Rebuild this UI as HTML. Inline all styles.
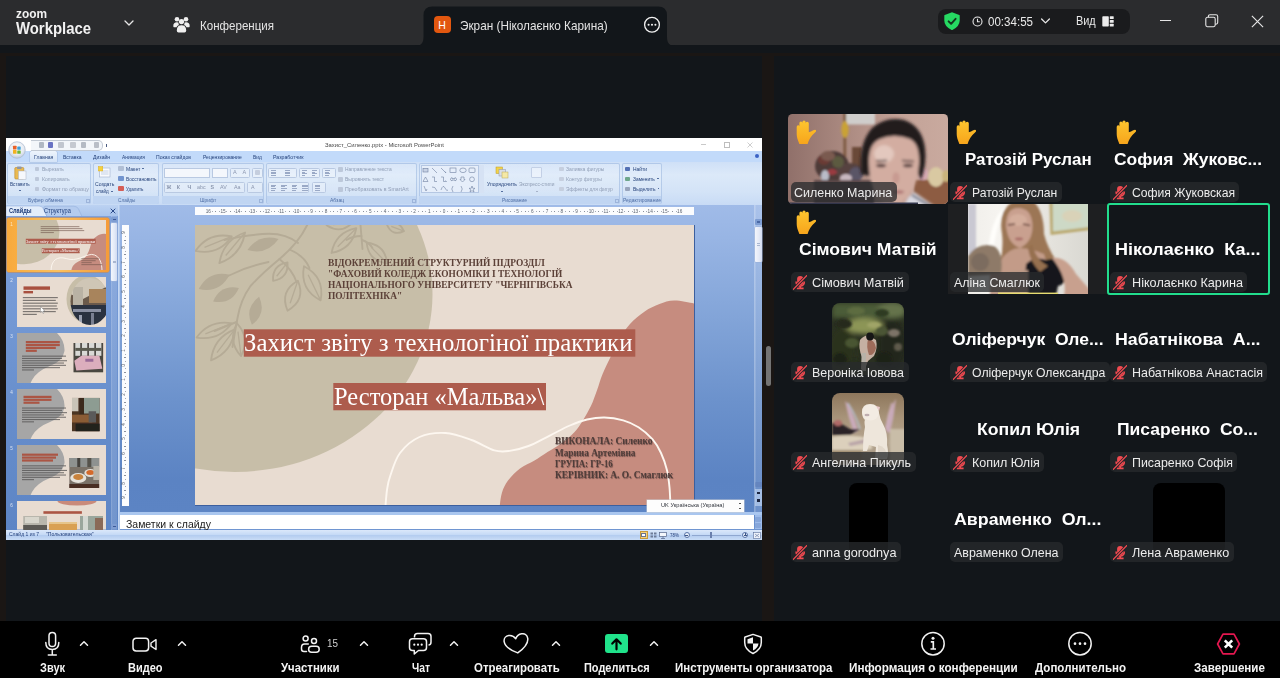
<!DOCTYPE html>
<html lang="ru">
<head>
<meta charset="utf-8">
<title>Zoom Workplace</title>
<style>
html,body{margin:0;padding:0;}
body{width:1280px;height:678px;overflow:hidden;background:#12161a;position:relative;font-family:"Liberation Sans",sans-serif;color:#e8e8e8;}
.abs{position:absolute;}
#topbar{left:0;top:0;width:1280px;height:44.500px;background:#2b2c2e;}
#band{left:0;top:53.300px;width:1280px;height:3px;background:#1a1614;}
#lstrip{left:0;top:53.300px;width:5.700px;height:567.700px;background:#1a1614;}
#divider{left:762.200px;top:53.300px;width:11.700px;height:567.700px;background:#1a1614;}
#toolbar{left:0;top:621px;width:1280px;height:57px;background:#000;}
#tab{display:none}
.t{position:absolute;white-space:pre;line-height:1;}
.pill{height:20px;border-radius:5px;background:rgba(40,42,45,.76);}
</style>
</head>
<body>
<div id="topbar" class="abs"></div>
<div id="band" class="abs"></div>
<div id="lstrip" class="abs"></div>
<div id="divider" class="abs"></div>
<div class="abs" style="left:765.800px;top:345.700px;width:5.200px;height:40.600px;border-radius:2.500px;background:#747474"></div>
<div id="tab" class="abs"></div>
<svg class="abs" style="left:410px;top:0" width="270" height="46" viewBox="0 0 270 46"><path d="M5 46 C11 46 13.500 43 13.500 37 L13.500 15.500 Q13.500 6.500 22.500 6.500 L248 6.500 Q257 6.500 257 15.500 L257 37 C257 43 259.500 46 265.500 46 Z" fill="#12161a"/></svg>
<div class="t" style="left:16.00px;top:7.20px;font-size:13px;font-weight:700;color:#f2f2f2;transform:scaleX(0.9133);transform-origin:0 0;">zoom</div>
<div class="t" style="left:16.00px;top:19.61px;font-size:17px;font-weight:700;color:#f2f2f2;transform:scaleX(0.8755);transform-origin:0 0;">Workplace</div>
<svg class="abs" style="left:123px;top:18px" width="12" height="10" viewBox="0 0 12 10"><path d="M2 3 L6 7 L10 3" fill="none" stroke="#e6e6e6" stroke-width="1.300" stroke-linecap="round" stroke-linejoin="round"/></svg>
<svg class="abs" style="left:173px;top:16px" width="17" height="17" viewBox="0 0 17 17"><g fill="#f0f0f0"><circle cx="4" cy="3.200" r="2.300"/><circle cx="13" cy="3.200" r="2.300"/><circle cx="8.500" cy="5.600" r="2.600"/><path d="M0.300 10 Q0.300 6.300 4 6.300 Q5.300 6.300 5.600 6.800 Q5.300 8.300 6 9 Q3.500 10 3.600 11.300 L1 11.300 Q0.300 11.300 0.300 10Z"/><path d="M16.700 10 Q16.700 6.300 13 6.300 Q11.700 6.300 11.400 6.800 Q11.700 8.300 11 9 Q13.500 10 13.400 11.300 L16 11.300 Q16.700 11.300 16.700 10Z"/><path d="M3.800 14.500 Q3.800 9.300 8.500 9.300 Q13.200 9.300 13.200 14.500 Q13.200 16.400 11.500 16.400 L5.500 16.400 Q3.800 16.400 3.800 14.500Z"/></g></svg>
<div class="t" style="left:199.70px;top:18.80px;font-size:13px;color:#e4e4e4;transform:scaleX(0.8884);transform-origin:0 0;">Конференция</div>
<div class="abs" style="left:433.500px;top:16.300px;width:17px;height:16.600px;border-radius:4px;background:#e2570f"></div>
<div class="t" style="left:438.20px;top:19.71px;font-size:10.5px;color:#fff;">Н</div>
<div class="t" style="left:459.80px;top:19.00px;font-size:13px;color:#e4e4e4;transform:scaleX(0.9055);transform-origin:0 0;">Экран (Ніколаєнко Карина)</div>
<svg class="abs" style="left:643px;top:16px" width="18" height="18" viewBox="0 0 18 18"><circle cx="9" cy="8.700" r="7.400" fill="none" stroke="#f0f0f0" stroke-width="1.300"/><circle cx="5.600" cy="8.700" r="1.050" fill="#f0f0f0"/><circle cx="9" cy="8.700" r="1.050" fill="#f0f0f0"/><circle cx="12.400" cy="8.700" r="1.050" fill="#f0f0f0"/></svg>
<div class="abs" style="left:938px;top:8.500px;width:192px;height:25.500px;border-radius:8px;background:#1a1b1d"></div>
<svg class="abs" style="left:944px;top:11.500px" width="16" height="18.500" viewBox="0 0 16 18.500"><path d="M8 0.300 L15.300 3 Q15.700 3.200 15.700 3.700 L15.700 8.500 Q15.700 14.500 8 18.200 Q0.300 14.500 0.300 8.500 L0.300 3.700 Q0.300 3.200 0.700 3 Z" fill="#26d962"/><path d="M4.600 9.300 L7.100 11.800 L11.600 6.800" fill="none" stroke="#14351f" stroke-width="1.900" stroke-linecap="round" stroke-linejoin="round"/></svg>
<svg class="abs" style="left:972px;top:15.500px" width="11" height="11" viewBox="0 0 11 11"><circle cx="5.500" cy="5.500" r="4.500" fill="none" stroke="#e8e8e8" stroke-width="1.100"/><path d="M5.500 2.800 L5.500 5.700 L7.800 5.700" fill="none" stroke="#e8e8e8" stroke-width="1.100"/></svg>
<div class="t" style="left:988.00px;top:16.02px;font-size:12.5px;color:#eaeaea;transform:scaleX(0.9248);transform-origin:0 0;">00:34:55</div>
<svg class="abs" style="left:1040px;top:17px" width="11" height="8" viewBox="0 0 11 8"><path d="M1.600 2 L5.500 5.900 L9.400 2" fill="none" stroke="#e6e6e6" stroke-width="1.300" stroke-linecap="round" stroke-linejoin="round"/></svg>
<div class="t" style="left:1075.50px;top:15.42px;font-size:12.5px;color:#eaeaea;transform:scaleX(0.8711);transform-origin:0 0;">Вид</div>
<svg class="abs" style="left:1102px;top:15.500px" width="12" height="11" viewBox="0 0 12 11"><g fill="#ececec"><rect x="0.300" y="0.300" width="6.500" height="10.200" rx="0.800"/><rect x="7.800" y="0.300" width="3.900" height="2.800" rx="0.500"/><rect x="7.800" y="4" width="3.900" height="2.800" rx="0.500"/><rect x="7.800" y="7.700" width="3.900" height="2.800" rx="0.500"/></g></svg>
<div class="abs" style="left:1159.500px;top:20px;width:11.500px;height:1.200px;background:#e6e6e6"></div>
<svg class="abs" style="left:1205px;top:14px" width="14" height="14" viewBox="0 0 14 14"><rect x="0.800" y="3.300" width="9.400" height="9.400" rx="1.600" fill="none" stroke="#e6e6e6" stroke-width="1.100"/><path d="M3.400 3.300 L3.400 2.400 Q3.400 0.800 5 0.800 L11 0.800 Q12.700 0.800 12.700 2.400 L12.700 8.600 Q12.700 10.200 11 10.200 L10.200 10.200" fill="none" stroke="#e6e6e6" stroke-width="1.100"/></svg>
<svg class="abs" style="left:1251px;top:15px" width="13" height="13" viewBox="0 0 13 13"><path d="M0.900 0.900 L12.100 12.100 M12.100 0.900 L0.900 12.100" fill="none" stroke="#e6e6e6" stroke-width="1.150"/></svg>
<div class="abs" style="left:0;top:0;width:770px;height:560px;filter:blur(.4px)"><div class="abs" style="left:6px;top:137.8px;width:756.2px;height:401.9px;background:#fff;"></div>
<div class="abs" style="left:6px;top:150.5px;width:756px;height:11.5px;background:#c2dafa;"></div>
<div class="abs" style="left:6px;top:162px;width:756px;height:42.5px;background:linear-gradient(#cfe0f7,#dce9f9 30%,#d3e3f7 70%,#c8dbf5);"></div>
<div class="abs" style="left:30.3px;top:151.3px;width:27px;height:11.2px;background:linear-gradient(#eef4fc,#d3e3f7);border-radius:2px 2px 0 0;box-shadow:0 0 0 .5px #9db7de"></div>
<svg class="abs" style="left:8.200px;top:140.700px" width="18" height="18" viewBox="0 0 21 21"><defs><radialGradient id="ob" cx=".5" cy=".35" r=".7"><stop offset="0" stop-color="#fff"/><stop offset=".6" stop-color="#e6ebf2"/><stop offset="1" stop-color="#b9c4d6"/></radialGradient></defs><circle cx="10.500" cy="10.500" r="9.600" fill="url(#ob)" stroke="#a9b6cb" stroke-width=".8"/><rect x="5.800" y="5.600" width="4.200" height="4.200" rx=".6" fill="#e8622a"/><rect x="10.800" y="6.400" width="4" height="3.800" rx=".6" fill="#3f9fd8"/><rect x="5.800" y="10.600" width="4.200" height="4.200" rx=".6" fill="#f2b01e"/><rect x="10.800" y="11" width="4" height="4" rx=".6" fill="#6fb536"/></svg>
<div class="abs" style="left:31px;top:140.3px;width:71px;height:9.2px;background:#f3f6fa;border:0.6px solid #c2c9d3;border-radius:0 5px 5px 0;border-left:none"></div>
<div class="abs" style="left:38.5px;top:142.3px;width:5.5px;height:5.5px;background:#9aa3b0;opacity:.75;border-radius:1px"></div>
<div class="abs" style="left:47.5px;top:142.3px;width:5.5px;height:5.5px;background:#3b47b0;opacity:.75;border-radius:1px"></div>
<div class="abs" style="left:58px;top:142.3px;width:5.5px;height:5.5px;background:#b0b6c0;opacity:.75;border-radius:1px"></div>
<div class="abs" style="left:70px;top:142.3px;width:5.5px;height:5.5px;background:#b5bac3;opacity:.75;border-radius:1px"></div>
<div class="abs" style="left:80.5px;top:142.3px;width:5.5px;height:5.5px;background:#9fa6b2;opacity:.75;border-radius:1px"></div>
<div class="abs" style="left:93.5px;top:142.3px;width:5.5px;height:5.5px;background:#a5abb6;opacity:.75;border-radius:1px"></div>
<div class="abs" style="left:106.3px;top:144px;width:1.2px;height:3.2px;background:#4a5a80;"></div>
<div class="t" style="left:325.00px;top:142.12px;font-size:6px;color:#484848;transform:scaleX(0.9811);transform-origin:0 0;">Захист_Силенко.pptx - Microsoft PowerPoint</div>
<div class="abs" style="left:701px;top:144.3px;width:5px;height:0.7px;background:#c9c9c9;"></div>
<div class="abs" style="left:724px;top:142px;width:4.2px;height:4.2px;background:transparent;border:0.7px solid #bdbdbd"></div>
<svg class="abs" style="left:746.500px;top:141.500px" width="6" height="6" viewBox="0 0 6 6"><path d="M.5 .5L5.500 5.500M5.500 .5L.5 5.500" stroke="#c2c2c2" stroke-width=".8"/></svg>
<div class="abs" style="left:754.700px;top:154.300px;width:4px;height:4px;border-radius:2px;background:#3b62c4"></div>
<div class="t" style="left:33.75px;top:154.87px;font-size:5.7px;color:#223f78;transform:scaleX(0.8873);transform-origin:0 0;">Главная</div>
<div class="t" style="left:63.40px;top:154.87px;font-size:5.7px;color:#223f78;transform:scaleX(0.8732);transform-origin:0 0;">Вставка</div>
<div class="t" style="left:92.80px;top:154.87px;font-size:5.7px;color:#223f78;transform:scaleX(0.8977);transform-origin:0 0;">Дизайн</div>
<div class="t" style="left:121.60px;top:154.87px;font-size:5.7px;color:#223f78;transform:scaleX(0.8521);transform-origin:0 0;">Анимация</div>
<div class="t" style="left:156.00px;top:154.87px;font-size:5.7px;color:#223f78;transform:scaleX(0.8919);transform-origin:0 0;">Показ слайдов</div>
<div class="t" style="left:202.50px;top:154.87px;font-size:5.7px;color:#223f78;transform:scaleX(0.8804);transform-origin:0 0;">Рецензирование</div>
<div class="t" style="left:252.50px;top:154.87px;font-size:5.7px;color:#223f78;transform:scaleX(0.8485);transform-origin:0 0;">Вид</div>
<div class="t" style="left:272.50px;top:154.87px;font-size:5.7px;color:#223f78;transform:scaleX(0.9175);transform-origin:0 0;">Разработчик</div>
<div class="abs" style="left:7px;top:163px;width:83.6px;height:41px;background:linear-gradient(rgba(255,255,255,.18),rgba(255,255,255,.05));border:0.6px solid rgba(150,178,220,.55);border-radius:2px;box-sizing:border-box"></div>
<div class="abs" style="left:7.6px;top:195.8px;width:82.39999999999999px;height:8px;background:#c0d5f2;border-radius:0 0 2px 2px"></div>
<div class="abs" style="left:92.8px;top:163px;width:66.60000000000001px;height:41px;background:linear-gradient(rgba(255,255,255,.18),rgba(255,255,255,.05));border:0.6px solid rgba(150,178,220,.55);border-radius:2px;box-sizing:border-box"></div>
<div class="abs" style="left:93.39999999999999px;top:195.8px;width:65.4px;height:8px;background:#c0d5f2;border-radius:0 0 2px 2px"></div>
<div class="abs" style="left:161.5px;top:163px;width:102.5px;height:41px;background:linear-gradient(rgba(255,255,255,.18),rgba(255,255,255,.05));border:0.6px solid rgba(150,178,220,.55);border-radius:2px;box-sizing:border-box"></div>
<div class="abs" style="left:162.1px;top:195.8px;width:101.3px;height:8px;background:#c0d5f2;border-radius:0 0 2px 2px"></div>
<div class="abs" style="left:266px;top:163px;width:151px;height:41px;background:linear-gradient(rgba(255,255,255,.18),rgba(255,255,255,.05));border:0.6px solid rgba(150,178,220,.55);border-radius:2px;box-sizing:border-box"></div>
<div class="abs" style="left:266.6px;top:195.8px;width:149.8px;height:8px;background:#c0d5f2;border-radius:0 0 2px 2px"></div>
<div class="abs" style="left:418.5px;top:163px;width:201.5px;height:41px;background:linear-gradient(rgba(255,255,255,.18),rgba(255,255,255,.05));border:0.6px solid rgba(150,178,220,.55);border-radius:2px;box-sizing:border-box"></div>
<div class="abs" style="left:419.1px;top:195.8px;width:200.3px;height:8px;background:#c0d5f2;border-radius:0 0 2px 2px"></div>
<div class="abs" style="left:622px;top:163px;width:40px;height:41px;background:linear-gradient(rgba(255,255,255,.18),rgba(255,255,255,.05));border:0.6px solid rgba(150,178,220,.55);border-radius:2px;box-sizing:border-box"></div>
<div class="abs" style="left:622.6px;top:195.8px;width:38.8px;height:8px;background:#c0d5f2;border-radius:0 0 2px 2px"></div>
<div class="t" style="left:27.50px;top:197.63px;font-size:5.4px;color:#4f6ea4;transform:scaleX(0.9539);transform-origin:0 0;">Буфер обмена</div>
<div class="t" style="left:117.50px;top:197.63px;font-size:5.4px;color:#4f6ea4;transform:scaleX(0.8705);transform-origin:0 0;">Слайды</div>
<div class="t" style="left:200.00px;top:197.63px;font-size:5.4px;color:#4f6ea4;transform:scaleX(0.9146);transform-origin:0 0;">Шрифт</div>
<div class="t" style="left:329.70px;top:197.63px;font-size:5.4px;color:#4f6ea4;transform:scaleX(0.9275);transform-origin:0 0;">Абзац</div>
<div class="t" style="left:501.90px;top:197.63px;font-size:5.4px;color:#4f6ea4;transform:scaleX(0.9193);transform-origin:0 0;">Рисование</div>
<div class="t" style="left:623.00px;top:197.63px;font-size:5.4px;color:#4f6ea4;transform:scaleX(0.9237);transform-origin:0 0;">Редактирование</div>
<div class="abs" style="left:85.5px;top:198.5px;width:2.6px;height:2.6px;background:transparent;border:0.5px solid #9db4da"></div>
<div class="abs" style="left:258.5px;top:198.5px;width:2.6px;height:2.6px;background:transparent;border:0.5px solid #9db4da"></div>
<div class="abs" style="left:411.5px;top:198.5px;width:2.6px;height:2.6px;background:transparent;border:0.5px solid #9db4da"></div>
<div class="abs" style="left:614.5px;top:198.5px;width:2.6px;height:2.6px;background:transparent;border:0.5px solid #9db4da"></div>
<svg class="abs" style="left:13.500px;top:166px" width="13" height="14" viewBox="0 0 13 14"><rect x=".8" y="1.500" width="9" height="11.500" rx="1" fill="#e9b950" stroke="#b98a2e" stroke-width=".6"/><rect x="3" y=".5" width="4.600" height="2.400" rx=".6" fill="#8f97a6"/><rect x="4.500" y="5" width="7.500" height="8.500" fill="#f6f8fc" stroke="#aab3c4" stroke-width=".5"/></svg>
<div class="t" style="left:10.00px;top:182.16px;font-size:5.6px;color:#223f78;transform:scaleX(0.8299);transform-origin:0 0;">Вставить</div>
<div class="abs" style="left:18.8px;top:189.8px;width:2px;height:1px;background:#5570a0;"></div>
<div class="t" style="left:41.60px;top:166.66px;font-size:5.6px;color:#8f9db5;transform:scaleX(0.8752);transform-origin:0 0;">Вырезать</div>
<div class="t" style="left:41.60px;top:176.66px;font-size:5.6px;color:#8f9db5;transform:scaleX(0.9220);transform-origin:0 0;">Копировать</div>
<div class="t" style="left:41.60px;top:186.66px;font-size:5.6px;color:#8f9db5;transform:scaleX(0.9320);transform-origin:0 0;">Формат по образцу</div>
<div class="abs" style="left:34.5px;top:166.5px;width:4.5px;height:4.5px;background:#b4bfd2;border-radius:1px;opacity:.8"></div>
<div class="abs" style="left:34.5px;top:176.5px;width:4.5px;height:4.5px;background:#b4bfd2;border-radius:1px;opacity:.8"></div>
<div class="abs" style="left:34.5px;top:186.5px;width:4.5px;height:4.5px;background:#b4bfd2;border-radius:1px;opacity:.8"></div>
<svg class="abs" style="left:97.500px;top:166px" width="13" height="12" viewBox="0 0 13 12"><rect x="1.500" y="2" width="10.500" height="9" fill="#f8fafd" stroke="#9fb0cc" stroke-width=".6"/><rect x="3" y="4" width="7.500" height="5" fill="#dfe6f2"/><rect x=".3" y=".5" width="4.500" height="4.500" fill="#f5d23c" stroke="#d9a81c" stroke-width=".4"/></svg>
<div class="t" style="left:94.70px;top:182.16px;font-size:5.6px;color:#223f78;transform:scaleX(0.9068);transform-origin:0 0;">Создать</div>
<div class="t" style="left:96.25px;top:188.66px;font-size:5.6px;color:#223f78;transform:scaleX(0.8185);transform-origin:0 0;">слайд</div>
<div class="abs" style="left:110.5px;top:190.8px;width:2px;height:1px;background:#5570a0;"></div>
<div class="t" style="left:125.60px;top:166.66px;font-size:5.6px;color:#223f78;transform:scaleX(0.9086);transform-origin:0 0;">Макет</div>
<div class="t" style="left:125.60px;top:176.66px;font-size:5.6px;color:#223f78;transform:scaleX(0.8547);transform-origin:0 0;">Восстановить</div>
<div class="t" style="left:125.60px;top:186.66px;font-size:5.6px;color:#223f78;transform:scaleX(0.8138);transform-origin:0 0;">Удалить</div>
<div class="abs" style="left:141.8px;top:168.3px;width:1.8px;height:0.9px;background:#5570a0;"></div>
<div class="abs" style="left:117.5px;top:166.3px;width:6px;height:5px;background:#a9b7cf;border-radius:1px;opacity:.85"></div>
<div class="abs" style="left:117.5px;top:176.3px;width:6px;height:5px;background:#5f86c8;border-radius:1px;opacity:.85"></div>
<div class="abs" style="left:117.5px;top:186.3px;width:6px;height:5px;background:#d3453a;border-radius:1px;opacity:.85"></div>
<div class="abs" style="left:163.8px;top:167.5px;width:46.2px;height:10px;background:#f4f7fc;border:0.5px solid #b9c9e2;box-sizing:border-box"></div>
<div class="abs" style="left:211.9px;top:167.5px;width:16.2px;height:10px;background:#f4f7fc;border:0.5px solid #b9c9e2;box-sizing:border-box"></div>
<div class="abs" style="left:230px;top:167.5px;width:20px;height:10px;background:rgba(255,255,255,.25);border:0.5px solid #b9c9e2;box-sizing:border-box;border-radius:1.500px"></div>
<div class="abs" style="left:252px;top:167.5px;width:11px;height:10px;background:rgba(255,255,255,.25);border:0.5px solid #b9c9e2;box-sizing:border-box;border-radius:1.500px"></div>
<div class="abs" style="left:163.5px;top:182px;width:81px;height:10.5px;background:rgba(255,255,255,.22);border:0.5px solid #b9c9e2;box-sizing:border-box;border-radius:1.500px"></div>
<div class="abs" style="left:246.5px;top:182px;width:16.5px;height:10.5px;background:rgba(255,255,255,.22);border:0.5px solid #b9c9e2;box-sizing:border-box;border-radius:1.500px"></div>
<div class="t" style="left:166.50px;top:185.01px;font-size:5.3px;font-weight:700;color:#8995ad;">Ж</div>
<div class="t" style="left:176.80px;top:185.01px;font-size:5.3px;font-weight:700;color:#8995ad;">К</div>
<div class="t" style="left:187.50px;top:185.01px;font-size:5.3px;font-weight:700;color:#8995ad;">Ч</div>
<div class="t" style="left:197.00px;top:185.01px;font-size:5.3px;color:#8995ad;">abc</div>
<div class="t" style="left:210.50px;top:185.01px;font-size:5.3px;font-weight:700;color:#8995ad;">S</div>
<div class="t" style="left:220.00px;top:185.01px;font-size:5.3px;color:#8995ad;">AV</div>
<div class="t" style="left:234.00px;top:185.01px;font-size:5.3px;color:#8995ad;">Aa</div>
<div class="t" style="left:251.00px;top:185.01px;font-size:5.3px;color:#8995ad;">A</div>
<div class="t" style="left:233.00px;top:170.34px;font-size:5.5px;color:#8c98b0;">A</div>
<div class="t" style="left:242.50px;top:170.34px;font-size:5.5px;color:#8c98b0;">A</div>
<div class="abs" style="left:255.3px;top:170px;width:4.5px;height:4.5px;background:#c5cede;border-radius:1px"></div>
<div class="abs" style="left:267.8px;top:167.5px;width:29px;height:10px;background:rgba(255,255,255,.25);border:0.5px solid #b9c9e2;box-sizing:border-box;border-radius:1.500px"></div>
<div class="abs" style="left:298.5px;top:167.5px;width:21px;height:10px;background:rgba(255,255,255,.25);border:0.5px solid #b9c9e2;box-sizing:border-box;border-radius:1.500px"></div>
<div class="abs" style="left:321.5px;top:167.5px;width:14px;height:10px;background:rgba(255,255,255,.25);border:0.5px solid #b9c9e2;box-sizing:border-box;border-radius:1.500px"></div>
<div class="abs" style="left:267.8px;top:182px;width:41.5px;height:10.5px;background:rgba(255,255,255,.25);border:0.5px solid #b9c9e2;box-sizing:border-box;border-radius:1.500px"></div>
<div class="abs" style="left:311.5px;top:182px;width:14px;height:10.5px;background:rgba(255,255,255,.25);border:0.5px solid #b9c9e2;box-sizing:border-box;border-radius:1.500px"></div>
<div class="abs" style="left:271px;top:170.0px;width:5px;height:0.8px;background:#9aa9c6;"></div><div class="abs" style="left:271px;top:171.7px;width:5px;height:0.8px;background:#9aa9c6;"></div><div class="abs" style="left:271px;top:173.4px;width:5px;height:0.8px;background:#9aa9c6;"></div><div class="abs" style="left:271px;top:175.1px;width:5px;height:0.8px;background:#9aa9c6;"></div>
<div class="abs" style="left:285px;top:170.0px;width:5px;height:0.8px;background:#9aa9c6;"></div><div class="abs" style="left:285px;top:171.7px;width:5px;height:0.8px;background:#9aa9c6;"></div><div class="abs" style="left:285px;top:173.4px;width:5px;height:0.8px;background:#9aa9c6;"></div><div class="abs" style="left:285px;top:175.1px;width:5px;height:0.8px;background:#9aa9c6;"></div>
<div class="abs" style="left:301.5px;top:170.0px;width:5px;height:0.8px;background:#9aa9c6;"></div><div class="abs" style="left:301.5px;top:171.7px;width:3.5px;height:0.8px;background:#9aa9c6;"></div><div class="abs" style="left:301.5px;top:173.4px;width:5px;height:0.8px;background:#9aa9c6;"></div><div class="abs" style="left:301.5px;top:175.1px;width:3.5px;height:0.8px;background:#9aa9c6;"></div>
<div class="abs" style="left:311.5px;top:170.0px;width:5px;height:0.8px;background:#9aa9c6;"></div><div class="abs" style="left:311.5px;top:171.7px;width:3.5px;height:0.8px;background:#9aa9c6;"></div><div class="abs" style="left:311.5px;top:173.4px;width:5px;height:0.8px;background:#9aa9c6;"></div><div class="abs" style="left:311.5px;top:175.1px;width:3.5px;height:0.8px;background:#9aa9c6;"></div>
<div class="abs" style="left:325px;top:170.0px;width:5px;height:0.8px;background:#9aa9c6;"></div><div class="abs" style="left:325px;top:171.7px;width:4px;height:0.8px;background:#9aa9c6;"></div><div class="abs" style="left:325px;top:173.4px;width:5px;height:0.8px;background:#9aa9c6;"></div><div class="abs" style="left:325px;top:175.1px;width:4px;height:0.8px;background:#9aa9c6;"></div>
<div class="abs" style="left:270.5px;top:184.5px;width:5.5px;height:0.8px;background:#9aa9c6;"></div><div class="abs" style="left:270.5px;top:186.2px;width:4px;height:0.8px;background:#9aa9c6;"></div><div class="abs" style="left:270.5px;top:187.9px;width:5.5px;height:0.8px;background:#9aa9c6;"></div><div class="abs" style="left:270.5px;top:189.6px;width:4px;height:0.8px;background:#9aa9c6;"></div>
<div class="abs" style="left:281px;top:184.5px;width:5.5px;height:0.8px;background:#9aa9c6;"></div><div class="abs" style="left:281px;top:186.2px;width:3.5px;height:0.8px;background:#9aa9c6;"></div><div class="abs" style="left:281px;top:187.9px;width:5.5px;height:0.8px;background:#9aa9c6;"></div><div class="abs" style="left:281px;top:189.6px;width:3.5px;height:0.8px;background:#9aa9c6;"></div>
<div class="abs" style="left:291.5px;top:184.5px;width:5.5px;height:0.8px;background:#9aa9c6;"></div><div class="abs" style="left:291.5px;top:186.2px;width:4px;height:0.8px;background:#9aa9c6;"></div><div class="abs" style="left:291.5px;top:187.9px;width:5.5px;height:0.8px;background:#9aa9c6;"></div><div class="abs" style="left:291.5px;top:189.6px;width:4px;height:0.8px;background:#9aa9c6;"></div>
<div class="abs" style="left:302px;top:184.5px;width:5.5px;height:0.8px;background:#9aa9c6;"></div><div class="abs" style="left:302px;top:186.2px;width:5.5px;height:0.8px;background:#9aa9c6;"></div><div class="abs" style="left:302px;top:187.9px;width:5.5px;height:0.8px;background:#9aa9c6;"></div><div class="abs" style="left:302px;top:189.6px;width:5.5px;height:0.8px;background:#9aa9c6;"></div>
<div class="abs" style="left:314.5px;top:184.5px;width:5.5px;height:0.8px;background:#9aa9c6;"></div><div class="abs" style="left:314.5px;top:186.2px;width:5.5px;height:0.8px;background:#9aa9c6;"></div><div class="abs" style="left:314.5px;top:187.9px;width:5.5px;height:0.8px;background:#9aa9c6;"></div><div class="abs" style="left:314.5px;top:189.6px;width:5.5px;height:0.8px;background:#9aa9c6;"></div>
<div class="t" style="left:345.30px;top:166.66px;font-size:5.6px;color:#8f9db5;transform:scaleX(0.8797);transform-origin:0 0;">Направление текста</div>
<div class="t" style="left:345.30px;top:176.66px;font-size:5.6px;color:#8f9db5;transform:scaleX(0.8963);transform-origin:0 0;">Выровнять текст</div>
<div class="t" style="left:345.30px;top:186.66px;font-size:5.6px;color:#8f9db5;transform:scaleX(0.9378);transform-origin:0 0;">Преобразовать в SmartArt</div>
<div class="abs" style="left:338px;top:166.5px;width:5px;height:5px;background:#b4bfd2;border-radius:1px;opacity:.8"></div>
<div class="abs" style="left:338px;top:176.5px;width:5px;height:5px;background:#b4bfd2;border-radius:1px;opacity:.8"></div>
<div class="abs" style="left:338px;top:186.5px;width:5px;height:5px;background:#b4bfd2;border-radius:1px;opacity:.8"></div>
<div class="abs" style="left:420.6px;top:165px;width:63px;height:27.5px;background:#e6eefa;border:0.5px solid #b5c7e3;box-sizing:border-box"></div>
<div class="abs" style="left:478.3px;top:165px;width:5.3px;height:27.5px;background:#d6e2f4;border-left:0.5px solid #b5c7e3;box-sizing:border-box"></div>
<svg class="abs" style="left:421px;top:165.500px" width="57" height="27" viewBox="0 0 57 27"><g fill="none" stroke="#6f7fa0" stroke-width=".6"><rect x="2" y="2.500" width="5" height="3.500" fill="#c9d3e6"/><path d="M11 2 L16 7"/><path d="M20 2 L25 7 L24 5.500"/><rect x="29" y="2" width="6" height="4.500"/><ellipse cx="42" cy="4.300" rx="3.200" ry="2.300"/><rect x="48" y="2" width="6" height="4.500" rx="1"/><path d="M2 15.500 L4.500 11 L7 15.500Z"/><path d="M11 11 L13.500 11 L13.500 15.500 L16 15.500"/><path d="M20 11 L22.500 11 L22.500 15.500 L25.500 15.500 L24.500 14.500"/><path d="M29 13.300 L31 11.500 L31 12.500 L34 12.500 L34 11.500 L36 13.300 L34 15 L34 14 L31 14 L31 15Z"/><path d="M40 11 L43 11 L43 13.500 L44 13.500 L41.500 16 L39 13.500 L40 13.500Z"/><circle cx="51" cy="13.300" r="2.400"/><path d="M3 20 L5 25 L6 23"/><path d="M11 21 Q14 20 16 25"/><path d="M20 24 Q22 18 24 22 T27 24"/><path d="M32 20 Q29.500 23 32 26"/><path d="M40 20 Q42.500 23 40 26"/><path d="M51 20 L51.800 22.300 L54 22.300 L52.300 23.700 L53 26 L51 24.600 L49 26 L49.700 23.700 L48 22.300 L50.200 22.300Z"/></g></svg>
<svg class="abs" style="left:494.500px;top:165.500px" width="14" height="13" viewBox="0 0 14 13"><rect x="1" y="1" width="6.500" height="6.500" fill="#f3d24a" stroke="#b99a2a" stroke-width=".5"/><rect x="4" y="3.500" width="6.500" height="6.500" fill="#d9dee8" stroke="#8c96aa" stroke-width=".5"/><rect x="7" y="6" width="6" height="6" fill="#f5e9a6" stroke="#b9a85a" stroke-width=".5"/></svg>
<div class="t" style="left:486.90px;top:182.16px;font-size:5.6px;color:#223f78;transform:scaleX(0.9002);transform-origin:0 0;">Упорядочить</div>
<div class="t" style="left:519.00px;top:182.16px;font-size:5.6px;color:#8f9db5;transform:scaleX(0.8644);transform-origin:0 0;">Экспресс-стили</div>
<div class="abs" style="left:500.8px;top:190.8px;width:2px;height:1px;background:#5570a0;"></div>
<div class="abs" style="left:536px;top:190.8px;width:2px;height:1px;background:#a7b3c9;"></div>
<div class="abs" style="left:530.5px;top:166.5px;width:11px;height:11px;background:rgba(255,255,255,.35);border:0.5px solid #c3d0e6;box-sizing:border-box;border-radius:1px"></div>
<div class="t" style="left:566.00px;top:166.66px;font-size:5.6px;color:#8f9db5;transform:scaleX(0.8979);transform-origin:0 0;">Заливка фигуры</div>
<div class="t" style="left:566.00px;top:176.66px;font-size:5.6px;color:#8f9db5;transform:scaleX(0.9168);transform-origin:0 0;">Контур фигуры</div>
<div class="t" style="left:566.00px;top:186.66px;font-size:5.6px;color:#8f9db5;transform:scaleX(0.8704);transform-origin:0 0;">Эффекты для фигур</div>
<div class="abs" style="left:558.5px;top:166.5px;width:5.5px;height:4.5px;background:#c3ccdc;border-radius:1px;opacity:.9"></div>
<div class="abs" style="left:558.5px;top:176.5px;width:5.5px;height:4.5px;background:#c3ccdc;border-radius:1px;opacity:.9"></div>
<div class="abs" style="left:558.5px;top:186.5px;width:5.5px;height:4.5px;background:#c3ccdc;border-radius:1px;opacity:.9"></div>
<div class="t" style="left:632.50px;top:166.66px;font-size:5.6px;color:#223f78;transform:scaleX(0.8823);transform-origin:0 0;">Найти</div>
<div class="t" style="left:632.50px;top:176.66px;font-size:5.6px;color:#223f78;transform:scaleX(0.8703);transform-origin:0 0;">Заменить</div>
<div class="t" style="left:632.50px;top:186.66px;font-size:5.6px;color:#223f78;transform:scaleX(0.8709);transform-origin:0 0;">Выделить</div>
<div class="abs" style="left:625px;top:166.5px;width:5px;height:4.5px;background:#3b5aa8;border-radius:1px;opacity:.85"></div>
<div class="abs" style="left:625px;top:176.5px;width:5px;height:4.5px;background:#5a9a78;border-radius:1px;opacity:.85"></div>
<div class="abs" style="left:625px;top:186.5px;width:5px;height:4.5px;background:#8c98b0;border-radius:1px;opacity:.85"></div>
<div class="abs" style="left:656.8px;top:178.3px;width:1.8px;height:0.9px;background:#5570a0;"></div>
<div class="abs" style="left:657.5px;top:188.3px;width:1.8px;height:0.9px;background:#5570a0;"></div>
<div class="abs" style="left:6px;top:204.5px;width:756px;height:325.5px;background:linear-gradient(#a0bbe8,#98b5e4 10%,#82a4d8 35%,#6c92cc 60%,#5b83c3 85%,#5c84c4 94%,#7096d2);"></div>
<div class="abs" style="left:6px;top:204.5px;width:113px;height:11.5px;background:linear-gradient(#bcd2f2,#a9c4ec);"></div>
<svg class="abs" style="left:6px;top:204.500px" width="84" height="12" viewBox="0 0 84 12"><path d="M0 11.500 L0 1 L33 1 Q36 1 37.500 4 L41 11.500 Z" fill="#e3edfb" stroke="#8fabd8" stroke-width=".5"/><path d="M41 11.500 L37.800 4 Q37 1.200 40 1.200 L68 1.200 Q71 1.200 72.500 4 L76 11.500 Z" fill="#b4cbee" stroke="#8fabd8" stroke-width=".5"/></svg>
<div class="t" style="left:8.75px;top:208.11px;font-size:6.6px;font-weight:700;color:#1c3a78;transform:scaleX(0.8486);transform-origin:0 0;">Слайды</div>
<div class="t" style="left:44.40px;top:208.37px;font-size:6.3px;color:#23427e;transform:scaleX(0.8966);transform-origin:0 0;">Структура</div>
<svg class="abs" style="left:110px;top:208px" width="6" height="6" viewBox="0 0 6 6"><path d="M.7 .7L5.300 5.300M5.300 .7L.7 5.300" stroke="#2c4a8a" stroke-width="1"/></svg>
<div class="abs" style="left:6px;top:216px;width:112.5px;height:314px;background:linear-gradient(#7fa2dc,#7499d5 30%,#668dcb 65%,#5d85c5);"></div>
<div class="abs" style="left:7px;top:218px;width:101.500px;height:54.200px;background:linear-gradient(90deg,#f7a93c,#fbc05e 50%,#f59b38);border-radius:1.500px;box-shadow:0 0 0 .5px #e48a2c"></div>
<div class="t" style="left:10.20px;top:222.71px;font-size:4.6px;color:rgba(255,240,210,.9);">1</div>
<div class="t" style="left:10.20px;top:278.91px;font-size:4.6px;color:rgba(255,255,255,.75);">2</div>
<div class="t" style="left:10.20px;top:335.21px;font-size:4.6px;color:rgba(255,255,255,.75);">3</div>
<div class="t" style="left:10.20px;top:391.31px;font-size:4.6px;color:rgba(255,255,255,.75);">4</div>
<div class="t" style="left:10.20px;top:447.41px;font-size:4.6px;color:rgba(255,255,255,.75);">5</div>
<div class="t" style="left:10.20px;top:503.61px;font-size:4.6px;color:rgba(255,255,255,.75);">6</div>
<svg class="abs" style="left:17.3px;top:220.3px" width="89" height="50.2" viewBox="194.500 225 498.500 280" preserveAspectRatio="none"><rect x="194.500" y="225" width="498.500" height="280" fill="#e8dcd1"/><ellipse cx="234" cy="294" rx="198" ry="178" fill="#c7bea8"/><path d="M694 303.600 C660 296 625 320 610 356 C598 400 585 440 547 452 C515 465 502 485 499 506 L694 506Z" fill="#c68c7f"/><path d="M385 507 C386 450 420 425 470 440 C530 460 570 420 613 417 C660 420 670 470 670.600 507" fill="none" stroke="#fdf7f0" stroke-width="5"/><rect x="244" y="329.500" width="391" height="27.600" fill="#ad5c4d"/><rect x="333.500" y="382.800" width="212.200" height="27.700" fill="#ad5c4d"/><g fill="#6b5047" opacity=".55"><rect x="327" y="259" width="217" height="6"/><rect x="327" y="270" width="234" height="6"/><rect x="327" y="281" width="244" height="6"/><rect x="327" y="292" width="74" height="6"/><rect x="555" y="438" width="97" height="6"/><rect x="555" y="449" width="80" height="6"/><rect x="555" y="460" width="58" height="6"/><rect x="555" y="471" width="117" height="6"/></g><g fill="#fff" font-family="Liberation Serif, serif" font-size="25.400"><text x="244.500" y="351.400" textLength="388" lengthAdjust="spacingAndGlyphs">Захист звіту з технологіної практики</text><text x="334" y="405.200" textLength="210" lengthAdjust="spacingAndGlyphs">Ресторан «Мальва»\</text></g></svg>
<svg class="abs" style="left:17.3px;top:276.5px" width="89" height="50.2" viewBox="0 0 89 50.200"><defs><clipPath id="t2c"><ellipse cx="73" cy="24.500" rx="19.500" ry="23.500"/></clipPath></defs><rect width="89" height="50.200" fill="#e8dcd1"/><ellipse cx="70" cy="22" rx="20.500" ry="24" fill="#c7bea8"/><g clip-path="url(#t2c)" filter="url(#b05)"><rect x="50" y="0" width="40" height="50.200" fill="#6b5a4c"/><path d="M50 0 L89 0 L89 10 L66 22 L50 16Z" fill="#cfc6b6"/><rect x="56" y="10" width="10" height="18" fill="#b9b2a4"/><rect x="72" y="12" width="17" height="14" fill="#a8845c"/><rect x="50" y="28" width="40" height="23" fill="#2c3140"/><rect x="56" y="32" width="28" height="3" fill="#8a90a2"/><rect x="62" y="38" width="3" height="10" fill="#9aa0b0"/><rect x="74" y="36" width="3" height="12" fill="#7a8092"/></g><rect x="6.500" y="9.400" width="26.500" height="3.400" fill="#a8503f"/><rect x="6.500" y="14" width="9.500" height="2.400" fill="#a8503f"/><g fill="#5a5654" opacity=".75"><rect x="5.800" y="20" width="35" height="1.200"/><rect x="5.800" y="22.800" width="33" height="1.200"/><rect x="5.800" y="25.600" width="35" height="1.200"/><rect x="5.800" y="28.400" width="34" height="1.200"/><rect x="5.800" y="31.200" width="35" height="1.200"/><rect x="5.800" y="34" width="33" height="1.200"/><rect x="5.800" y="36.800" width="14" height="1.200"/></g><path d="M23.500 29.500 L23.500 35.500 L25 34.300 L26 36.600 L27 36.100 L26 34 L27.800 33.800Z" fill="#fff" stroke="#666" stroke-width=".35"/></svg>
<svg class="abs" style="left:17.3px;top:332.8px" width="89" height="50.2" viewBox="0 0 89 50.200"><rect width="89" height="50.200" fill="#e8dcd1"/><path d="M0 0 L40 0 Q48 8 47.500 18 Q46 28 33 33 Q20 38 15 47 L13.500 50.200 L0 50.200Z" fill="#a6a6a6"/><rect x="8.8" y="8.0" width="34" height="2.200" fill="#ab5544"/><rect x="8.8" y="10.9" width="34" height="2.200" fill="#ab5544"/><rect x="8.8" y="13.8" width="30" height="2.200" fill="#ab5544"/><rect x="8.8" y="16.7" width="11" height="2.200" fill="#ab5544"/><g fill="#4c4a4a" opacity=".7"><rect x="5" y="22.6" width="44" height="1.100"/><rect x="5" y="24.9" width="40" height="1.100"/><rect x="5" y="27.2" width="45" height="1.100"/><rect x="5" y="29.5" width="42" height="1.100"/><rect x="5" y="31.8" width="44" height="1.100"/><rect x="5" y="34.1" width="38" height="1.100"/><rect x="5" y="36.4" width="12" height="1.100"/></g><g filter="url(#b05)"><svg x="56.3" y="10" width="30.1" height="29.6" viewBox="0 0 30 30" preserveAspectRatio="none"><rect width="30" height="30" fill="#4a463f"/><rect x="2" y="0" width="26" height="13" fill="#d9d9d6"/><rect x="7" y="0" width="1.500" height="14" fill="#3a3632"/><rect x="14" y="0" width="1.500" height="14" fill="#3a3632"/><rect x="21" y="0" width="1.500" height="14" fill="#3a3632"/><rect x="2" y="5" width="26" height="3" fill="#5a5a50"/><path d="M1 18 L8 13 L26 13 L29 26 L3 28Z" fill="#dcaebd"/><rect x="12" y="16" width="8" height="3" fill="#9a6a98"/></svg></g></svg>
<svg class="abs" style="left:17.3px;top:388.9px" width="89" height="50.2" viewBox="0 0 89 50.200"><rect width="89" height="50.200" fill="#e8dcd1"/><path d="M0 0 L40 0 Q48 8 47.500 18 Q46 28 33 33 Q20 38 15 47 L13.500 50.200 L0 50.200Z" fill="#a6a6a6"/><rect x="6.5" y="6.8" width="28" height="2.200" fill="#ab5544"/><rect x="6.5" y="9.7" width="28" height="2.200" fill="#ab5544"/><rect x="6.5" y="12.6" width="16" height="2.200" fill="#ab5544"/><g fill="#4c4a4a" opacity=".7"><rect x="5" y="18.5" width="44" height="1.100"/><rect x="5" y="20.8" width="40" height="1.100"/><rect x="5" y="23.1" width="45" height="1.100"/><rect x="5" y="25.4" width="42" height="1.100"/><rect x="5" y="27.7" width="44" height="1.100"/><rect x="5" y="30.0" width="38" height="1.100"/><rect x="5" y="32.3" width="12" height="1.100"/></g><g filter="url(#b05)"><svg x="54.9" y="8.8" width="27.9" height="33.7" viewBox="0 0 30 30" preserveAspectRatio="none"><rect width="30" height="30" fill="#4c3424"/><rect x="13" y="0" width="17" height="14" fill="#8d9c92"/><rect x="0" y="0" width="7" height="12" fill="#c9c4b8"/><rect x="8" y="0" width="5" height="18" fill="#3a2a1e"/><rect x="0" y="15" width="22" height="7" fill="#8a5c34"/><rect x="4" y="23" width="26" height="7" fill="#23201f"/><rect x="18" y="12" width="8" height="10" fill="#5a5a5a"/></svg></g></svg>
<svg class="abs" style="left:17.3px;top:445px" width="89" height="50.2" viewBox="0 0 89 50.200"><rect width="89" height="50.200" fill="#e8dcd1"/><path d="M0 0 L40 0 Q48 8 47.500 18 Q46 28 33 33 Q20 38 15 47 L13.500 50.200 L0 50.200Z" fill="#a6a6a6"/><rect x="5" y="8.6" width="36" height="2.200" fill="#ab5544"/><rect x="5" y="11.5" width="34" height="2.200" fill="#ab5544"/><rect x="5" y="14.4" width="31" height="2.200" fill="#ab5544"/><g fill="#4c4a4a" opacity=".7"><rect x="5" y="20.3" width="44" height="1.100"/><rect x="5" y="22.6" width="40" height="1.100"/><rect x="5" y="24.9" width="45" height="1.100"/><rect x="5" y="27.2" width="42" height="1.100"/><rect x="5" y="29.5" width="44" height="1.100"/><rect x="5" y="31.8" width="38" height="1.100"/><rect x="5" y="34.1" width="12" height="1.100"/></g><g filter="url(#b05)"><svg x="52.2" y="13" width="30.2" height="30" viewBox="0 0 30 30" preserveAspectRatio="none"><rect width="30" height="30" fill="#7a7268"/><rect x="0" y="0" width="30" height="9" fill="#8e9290"/><rect x="8" y="0" width="3" height="9" fill="#44423e"/><rect x="18" y="0" width="4" height="9" fill="#55524c"/><ellipse cx="9" cy="20" rx="8" ry="5" fill="#e6e2da"/><ellipse cx="9" cy="19" rx="5" ry="3" fill="#c9833c"/><ellipse cx="21" cy="15" rx="6" ry="4" fill="#e2ded6"/><ellipse cx="21" cy="14.500" rx="4" ry="2.500" fill="#d46a2c"/><rect x="0" y="26" width="30" height="4" fill="#4a2e22"/><rect x="24" y="8" width="6" height="14" fill="#b9b4a8"/></svg></g></svg>
<svg class="abs" style="left:17.3px;top:501.2px" width="89" height="28.600" viewBox="0 0 89 28.600"><rect width="89" height="28.600" fill="#e8dcd1"/><ellipse cx="60" cy="0" rx="19.500" ry="4.500" fill="#c98a7a"/><rect x="26.400" y="10.200" width="38.500" height="2.600" fill="#ab5544"/><g filter="url(#b05)"><rect x="6.200" y="15" width="23.800" height="14" fill="#b8b6ac"/><rect x="8" y="16" width="14" height="6" fill="#d8d6cc"/><rect x="6.200" y="24" width="23.800" height="5" fill="#5c5a54"/><rect x="32" y="21" width="28" height="8" fill="#d9a052"/><rect x="32" y="21" width="28" height="2" fill="#e6c48a"/><rect x="63" y="15" width="23" height="14" fill="#9aa69c"/><rect x="78" y="17" width="8" height="12" fill="#8a6a58"/><rect x="66" y="15" width="5" height="14" fill="#d4d8d2"/></g></svg>
<div class="abs" style="left:110.8px;top:216px;width:6.7px;height:314px;background:linear-gradient(90deg,rgba(255,255,255,.3),rgba(255,255,255,.14) 25%,rgba(255,255,255,.12));"></div>
<div class="abs" style="left:111.3px;top:217px;width:5.8px;height:5px;background:#7e9dd2;border-radius:1px"></div>
<div class="abs" style="left:112.8px;top:218.8px;width:2.8px;height:1.3px;background:#3c5a98;"></div>
<div class="abs" style="left:111.3px;top:222.5px;width:5.8px;height:58.5px;background:linear-gradient(90deg,#f3f6fc,#e2e9f7 60%,#d0dbf1);border-radius:1px;box-shadow:0 0 0 .5px #9ab0d8"></div>
<div class="abs" style="left:112.6px;top:260.5px;width:3px;height:0.6px;background:#a9b6d0;"></div>
<div class="abs" style="left:112.6px;top:262px;width:3px;height:0.6px;background:#a9b6d0;"></div>
<div class="abs" style="left:111.3px;top:524.3px;width:5.8px;height:5px;background:#7e9dd2;border-radius:1px"></div>
<div class="abs" style="left:112.8px;top:526.2px;width:2.8px;height:1.3px;background:#3c5a98;"></div>
<div class="abs" style="left:117.5px;top:204.5px;width:2.3px;height:325.5px;background:linear-gradient(90deg,#cfdff6,#a9c3ea);"></div>
<div class="abs" style="left:194.5px;top:207.2px;width:499px;height:8px;background:#fbfcfe;"></div>
<div class="abs" style="left:121.8px;top:225px;width:6.8px;height:280.5px;background:#fbfcfe;"></div>
<div class="t" style="left:205.72px;top:209.62px;font-size:4.7px;color:#5d6470;">16</div><div class="abs" style="left:215.42px;top:210.6px;width:0.7px;height:1.8px;background:#8a909c;"></div><div class="abs" style="left:211.72px;top:211.3px;width:0.7px;height:0.8px;background:#a5abb6;"></div><div class="abs" style="left:219.12px;top:211.3px;width:0.7px;height:0.8px;background:#a5abb6;"></div><div class="t" style="left:220.45px;top:209.62px;font-size:4.7px;color:#5d6470;">15</div><div class="abs" style="left:230.14999999999998px;top:210.6px;width:0.7px;height:1.8px;background:#8a909c;"></div><div class="abs" style="left:226.45px;top:211.3px;width:0.7px;height:0.8px;background:#a5abb6;"></div><div class="abs" style="left:233.85px;top:211.3px;width:0.7px;height:0.8px;background:#a5abb6;"></div><div class="t" style="left:235.18px;top:209.62px;font-size:4.7px;color:#5d6470;">14</div><div class="abs" style="left:244.88px;top:210.6px;width:0.7px;height:1.8px;background:#8a909c;"></div><div class="abs" style="left:241.18px;top:211.3px;width:0.7px;height:0.8px;background:#a5abb6;"></div><div class="abs" style="left:248.58px;top:211.3px;width:0.7px;height:0.8px;background:#a5abb6;"></div><div class="t" style="left:249.91px;top:209.62px;font-size:4.7px;color:#5d6470;">13</div><div class="abs" style="left:259.61px;top:210.6px;width:0.7px;height:1.8px;background:#8a909c;"></div><div class="abs" style="left:255.91px;top:211.3px;width:0.7px;height:0.8px;background:#a5abb6;"></div><div class="abs" style="left:263.31px;top:211.3px;width:0.7px;height:0.8px;background:#a5abb6;"></div><div class="t" style="left:264.64px;top:209.62px;font-size:4.7px;color:#5d6470;">12</div><div class="abs" style="left:274.34000000000003px;top:210.6px;width:0.7px;height:1.8px;background:#8a909c;"></div><div class="abs" style="left:270.64px;top:211.3px;width:0.7px;height:0.8px;background:#a5abb6;"></div><div class="abs" style="left:278.04px;top:211.3px;width:0.7px;height:0.8px;background:#a5abb6;"></div><div class="t" style="left:279.37px;top:209.62px;font-size:4.7px;color:#5d6470;">11</div><div class="abs" style="left:289.07000000000005px;top:210.6px;width:0.7px;height:1.8px;background:#8a909c;"></div><div class="abs" style="left:285.37px;top:211.3px;width:0.7px;height:0.8px;background:#a5abb6;"></div><div class="abs" style="left:292.77000000000004px;top:211.3px;width:0.7px;height:0.8px;background:#a5abb6;"></div><div class="t" style="left:294.10px;top:209.62px;font-size:4.7px;color:#5d6470;">10</div><div class="abs" style="left:303.8px;top:210.6px;width:0.7px;height:1.8px;background:#8a909c;"></div><div class="abs" style="left:300.09999999999997px;top:211.3px;width:0.7px;height:0.8px;background:#a5abb6;"></div><div class="abs" style="left:307.5px;top:211.3px;width:0.7px;height:0.8px;background:#a5abb6;"></div><div class="t" style="left:310.13px;top:209.62px;font-size:4.7px;color:#5d6470;">9</div><div class="abs" style="left:318.53000000000003px;top:210.6px;width:0.7px;height:1.8px;background:#8a909c;"></div><div class="abs" style="left:314.83px;top:211.3px;width:0.7px;height:0.8px;background:#a5abb6;"></div><div class="abs" style="left:322.23px;top:211.3px;width:0.7px;height:0.8px;background:#a5abb6;"></div><div class="t" style="left:324.86px;top:209.62px;font-size:4.7px;color:#5d6470;">8</div><div class="abs" style="left:333.26px;top:210.6px;width:0.7px;height:1.8px;background:#8a909c;"></div><div class="abs" style="left:329.55999999999995px;top:211.3px;width:0.7px;height:0.8px;background:#a5abb6;"></div><div class="abs" style="left:336.96px;top:211.3px;width:0.7px;height:0.8px;background:#a5abb6;"></div><div class="t" style="left:339.59px;top:209.62px;font-size:4.7px;color:#5d6470;">7</div><div class="abs" style="left:347.99px;top:210.6px;width:0.7px;height:1.8px;background:#8a909c;"></div><div class="abs" style="left:344.28999999999996px;top:211.3px;width:0.7px;height:0.8px;background:#a5abb6;"></div><div class="abs" style="left:351.69px;top:211.3px;width:0.7px;height:0.8px;background:#a5abb6;"></div><div class="t" style="left:354.32px;top:209.62px;font-size:4.7px;color:#5d6470;">6</div><div class="abs" style="left:362.72px;top:210.6px;width:0.7px;height:1.8px;background:#8a909c;"></div><div class="abs" style="left:359.02px;top:211.3px;width:0.7px;height:0.8px;background:#a5abb6;"></div><div class="abs" style="left:366.42px;top:211.3px;width:0.7px;height:0.8px;background:#a5abb6;"></div><div class="t" style="left:369.05px;top:209.62px;font-size:4.7px;color:#5d6470;">5</div><div class="abs" style="left:377.45000000000005px;top:210.6px;width:0.7px;height:1.8px;background:#8a909c;"></div><div class="abs" style="left:373.75px;top:211.3px;width:0.7px;height:0.8px;background:#a5abb6;"></div><div class="abs" style="left:381.15000000000003px;top:211.3px;width:0.7px;height:0.8px;background:#a5abb6;"></div><div class="t" style="left:383.78px;top:209.62px;font-size:4.7px;color:#5d6470;">4</div><div class="abs" style="left:392.18px;top:210.6px;width:0.7px;height:1.8px;background:#8a909c;"></div><div class="abs" style="left:388.47999999999996px;top:211.3px;width:0.7px;height:0.8px;background:#a5abb6;"></div><div class="abs" style="left:395.88px;top:211.3px;width:0.7px;height:0.8px;background:#a5abb6;"></div><div class="t" style="left:398.51px;top:209.62px;font-size:4.7px;color:#5d6470;">3</div><div class="abs" style="left:406.91px;top:210.6px;width:0.7px;height:1.8px;background:#8a909c;"></div><div class="abs" style="left:403.21px;top:211.3px;width:0.7px;height:0.8px;background:#a5abb6;"></div><div class="abs" style="left:410.61px;top:211.3px;width:0.7px;height:0.8px;background:#a5abb6;"></div><div class="t" style="left:413.24px;top:209.62px;font-size:4.7px;color:#5d6470;">2</div><div class="abs" style="left:421.64000000000004px;top:210.6px;width:0.7px;height:1.8px;background:#8a909c;"></div><div class="abs" style="left:417.94px;top:211.3px;width:0.7px;height:0.8px;background:#a5abb6;"></div><div class="abs" style="left:425.34000000000003px;top:211.3px;width:0.7px;height:0.8px;background:#a5abb6;"></div><div class="t" style="left:427.97px;top:209.62px;font-size:4.7px;color:#5d6470;">1</div><div class="abs" style="left:436.37px;top:210.6px;width:0.7px;height:1.8px;background:#8a909c;"></div><div class="abs" style="left:432.66999999999996px;top:211.3px;width:0.7px;height:0.8px;background:#a5abb6;"></div><div class="abs" style="left:440.07px;top:211.3px;width:0.7px;height:0.8px;background:#a5abb6;"></div><div class="t" style="left:442.70px;top:209.62px;font-size:4.7px;color:#5d6470;">0</div><div class="abs" style="left:451.1px;top:210.6px;width:0.7px;height:1.8px;background:#8a909c;"></div><div class="abs" style="left:447.4px;top:211.3px;width:0.7px;height:0.8px;background:#a5abb6;"></div><div class="abs" style="left:454.8px;top:211.3px;width:0.7px;height:0.8px;background:#a5abb6;"></div><div class="t" style="left:457.43px;top:209.62px;font-size:4.7px;color:#5d6470;">1</div><div class="abs" style="left:465.83000000000004px;top:210.6px;width:0.7px;height:1.8px;background:#8a909c;"></div><div class="abs" style="left:462.13px;top:211.3px;width:0.7px;height:0.8px;background:#a5abb6;"></div><div class="abs" style="left:469.53000000000003px;top:211.3px;width:0.7px;height:0.8px;background:#a5abb6;"></div><div class="t" style="left:472.16px;top:209.62px;font-size:4.7px;color:#5d6470;">2</div><div class="abs" style="left:480.56px;top:210.6px;width:0.7px;height:1.8px;background:#8a909c;"></div><div class="abs" style="left:476.85999999999996px;top:211.3px;width:0.7px;height:0.8px;background:#a5abb6;"></div><div class="abs" style="left:484.26px;top:211.3px;width:0.7px;height:0.8px;background:#a5abb6;"></div><div class="t" style="left:486.89px;top:209.62px;font-size:4.7px;color:#5d6470;">3</div><div class="abs" style="left:495.29px;top:210.6px;width:0.7px;height:1.8px;background:#8a909c;"></div><div class="abs" style="left:491.59px;top:211.3px;width:0.7px;height:0.8px;background:#a5abb6;"></div><div class="abs" style="left:498.99px;top:211.3px;width:0.7px;height:0.8px;background:#a5abb6;"></div><div class="t" style="left:501.62px;top:209.62px;font-size:4.7px;color:#5d6470;">4</div><div class="abs" style="left:510.02000000000004px;top:210.6px;width:0.7px;height:1.8px;background:#8a909c;"></div><div class="abs" style="left:506.32px;top:211.3px;width:0.7px;height:0.8px;background:#a5abb6;"></div><div class="abs" style="left:513.72px;top:211.3px;width:0.7px;height:0.8px;background:#a5abb6;"></div><div class="t" style="left:516.35px;top:209.62px;font-size:4.7px;color:#5d6470;">5</div><div class="abs" style="left:524.75px;top:210.6px;width:0.7px;height:1.8px;background:#8a909c;"></div><div class="abs" style="left:521.05px;top:211.3px;width:0.7px;height:0.8px;background:#a5abb6;"></div><div class="abs" style="left:528.4499999999999px;top:211.3px;width:0.7px;height:0.8px;background:#a5abb6;"></div><div class="t" style="left:531.08px;top:209.62px;font-size:4.7px;color:#5d6470;">6</div><div class="abs" style="left:539.48px;top:210.6px;width:0.7px;height:1.8px;background:#8a909c;"></div><div class="abs" style="left:535.78px;top:211.3px;width:0.7px;height:0.8px;background:#a5abb6;"></div><div class="abs" style="left:543.18px;top:211.3px;width:0.7px;height:0.8px;background:#a5abb6;"></div><div class="t" style="left:545.81px;top:209.62px;font-size:4.7px;color:#5d6470;">7</div><div class="abs" style="left:554.21px;top:210.6px;width:0.7px;height:1.8px;background:#8a909c;"></div><div class="abs" style="left:550.51px;top:211.3px;width:0.7px;height:0.8px;background:#a5abb6;"></div><div class="abs" style="left:557.91px;top:211.3px;width:0.7px;height:0.8px;background:#a5abb6;"></div><div class="t" style="left:560.54px;top:209.62px;font-size:4.7px;color:#5d6470;">8</div><div class="abs" style="left:568.94px;top:210.6px;width:0.7px;height:1.8px;background:#8a909c;"></div><div class="abs" style="left:565.24px;top:211.3px;width:0.7px;height:0.8px;background:#a5abb6;"></div><div class="abs" style="left:572.64px;top:211.3px;width:0.7px;height:0.8px;background:#a5abb6;"></div><div class="t" style="left:575.27px;top:209.62px;font-size:4.7px;color:#5d6470;">9</div><div class="abs" style="left:583.67px;top:210.6px;width:0.7px;height:1.8px;background:#8a909c;"></div><div class="abs" style="left:579.9699999999999px;top:211.3px;width:0.7px;height:0.8px;background:#a5abb6;"></div><div class="abs" style="left:587.3699999999999px;top:211.3px;width:0.7px;height:0.8px;background:#a5abb6;"></div><div class="t" style="left:588.70px;top:209.62px;font-size:4.7px;color:#5d6470;">10</div><div class="abs" style="left:598.4px;top:210.6px;width:0.7px;height:1.8px;background:#8a909c;"></div><div class="abs" style="left:594.6999999999999px;top:211.3px;width:0.7px;height:0.8px;background:#a5abb6;"></div><div class="abs" style="left:602.0999999999999px;top:211.3px;width:0.7px;height:0.8px;background:#a5abb6;"></div><div class="t" style="left:603.43px;top:209.62px;font-size:4.7px;color:#5d6470;">11</div><div class="abs" style="left:613.13px;top:210.6px;width:0.7px;height:1.8px;background:#8a909c;"></div><div class="abs" style="left:609.43px;top:211.3px;width:0.7px;height:0.8px;background:#a5abb6;"></div><div class="abs" style="left:616.8299999999999px;top:211.3px;width:0.7px;height:0.8px;background:#a5abb6;"></div><div class="t" style="left:618.16px;top:209.62px;font-size:4.7px;color:#5d6470;">12</div><div class="abs" style="left:627.86px;top:210.6px;width:0.7px;height:1.8px;background:#8a909c;"></div><div class="abs" style="left:624.16px;top:211.3px;width:0.7px;height:0.8px;background:#a5abb6;"></div><div class="abs" style="left:631.56px;top:211.3px;width:0.7px;height:0.8px;background:#a5abb6;"></div><div class="t" style="left:632.89px;top:209.62px;font-size:4.7px;color:#5d6470;">13</div><div class="abs" style="left:642.59px;top:210.6px;width:0.7px;height:1.8px;background:#8a909c;"></div><div class="abs" style="left:638.89px;top:211.3px;width:0.7px;height:0.8px;background:#a5abb6;"></div><div class="abs" style="left:646.29px;top:211.3px;width:0.7px;height:0.8px;background:#a5abb6;"></div><div class="t" style="left:647.62px;top:209.62px;font-size:4.7px;color:#5d6470;">14</div><div class="abs" style="left:657.32px;top:210.6px;width:0.7px;height:1.8px;background:#8a909c;"></div><div class="abs" style="left:653.62px;top:211.3px;width:0.7px;height:0.8px;background:#a5abb6;"></div><div class="abs" style="left:661.02px;top:211.3px;width:0.7px;height:0.8px;background:#a5abb6;"></div><div class="t" style="left:662.35px;top:209.62px;font-size:4.7px;color:#5d6470;">15</div><div class="abs" style="left:672.0500000000001px;top:210.6px;width:0.7px;height:1.8px;background:#8a909c;"></div><div class="abs" style="left:668.35px;top:211.3px;width:0.7px;height:0.8px;background:#a5abb6;"></div><div class="abs" style="left:675.75px;top:211.3px;width:0.7px;height:0.8px;background:#a5abb6;"></div><div class="t" style="left:677.08px;top:209.62px;font-size:4.7px;color:#5d6470;">16</div>
<div class="t" style="left:123.200px;top:230.13px;font-size:4.700px;color:#5d6470;transform:rotate(-90deg);transform-origin:50% 50%">9</div><div class="abs" style="left:124.2px;top:239.53px;width:1.8px;height:0.7px;background:#8a909c;"></div><div class="abs" style="left:124.8px;top:235.83px;width:0.8px;height:0.7px;background:#a5abb6;"></div><div class="abs" style="left:124.8px;top:243.23000000000002px;width:0.8px;height:0.7px;background:#a5abb6;"></div><div class="t" style="left:123.200px;top:244.86px;font-size:4.700px;color:#5d6470;transform:rotate(-90deg);transform-origin:50% 50%">8</div><div class="abs" style="left:124.2px;top:254.26px;width:1.8px;height:0.7px;background:#8a909c;"></div><div class="abs" style="left:124.8px;top:250.56px;width:0.8px;height:0.7px;background:#a5abb6;"></div><div class="abs" style="left:124.8px;top:257.96px;width:0.8px;height:0.7px;background:#a5abb6;"></div><div class="t" style="left:123.200px;top:259.59px;font-size:4.700px;color:#5d6470;transform:rotate(-90deg);transform-origin:50% 50%">7</div><div class="abs" style="left:124.2px;top:268.99px;width:1.8px;height:0.7px;background:#8a909c;"></div><div class="abs" style="left:124.8px;top:265.28999999999996px;width:0.8px;height:0.7px;background:#a5abb6;"></div><div class="abs" style="left:124.8px;top:272.69px;width:0.8px;height:0.7px;background:#a5abb6;"></div><div class="t" style="left:123.200px;top:274.32px;font-size:4.700px;color:#5d6470;transform:rotate(-90deg);transform-origin:50% 50%">6</div><div class="abs" style="left:124.2px;top:283.72px;width:1.8px;height:0.7px;background:#8a909c;"></div><div class="abs" style="left:124.8px;top:280.02px;width:0.8px;height:0.7px;background:#a5abb6;"></div><div class="abs" style="left:124.8px;top:287.42px;width:0.8px;height:0.7px;background:#a5abb6;"></div><div class="t" style="left:123.200px;top:289.05px;font-size:4.700px;color:#5d6470;transform:rotate(-90deg);transform-origin:50% 50%">5</div><div class="abs" style="left:124.2px;top:298.45000000000005px;width:1.8px;height:0.7px;background:#8a909c;"></div><div class="abs" style="left:124.8px;top:294.75px;width:0.8px;height:0.7px;background:#a5abb6;"></div><div class="abs" style="left:124.8px;top:302.15000000000003px;width:0.8px;height:0.7px;background:#a5abb6;"></div><div class="t" style="left:123.200px;top:303.78px;font-size:4.700px;color:#5d6470;transform:rotate(-90deg);transform-origin:50% 50%">4</div><div class="abs" style="left:124.2px;top:313.18px;width:1.8px;height:0.7px;background:#8a909c;"></div><div class="abs" style="left:124.8px;top:309.47999999999996px;width:0.8px;height:0.7px;background:#a5abb6;"></div><div class="abs" style="left:124.8px;top:316.88px;width:0.8px;height:0.7px;background:#a5abb6;"></div><div class="t" style="left:123.200px;top:318.51px;font-size:4.700px;color:#5d6470;transform:rotate(-90deg);transform-origin:50% 50%">3</div><div class="abs" style="left:124.2px;top:327.91px;width:1.8px;height:0.7px;background:#8a909c;"></div><div class="abs" style="left:124.8px;top:324.21px;width:0.8px;height:0.7px;background:#a5abb6;"></div><div class="abs" style="left:124.8px;top:331.61px;width:0.8px;height:0.7px;background:#a5abb6;"></div><div class="t" style="left:123.200px;top:333.24px;font-size:4.700px;color:#5d6470;transform:rotate(-90deg);transform-origin:50% 50%">2</div><div class="abs" style="left:124.2px;top:342.64000000000004px;width:1.8px;height:0.7px;background:#8a909c;"></div><div class="abs" style="left:124.8px;top:338.94px;width:0.8px;height:0.7px;background:#a5abb6;"></div><div class="abs" style="left:124.8px;top:346.34000000000003px;width:0.8px;height:0.7px;background:#a5abb6;"></div><div class="t" style="left:123.200px;top:347.97px;font-size:4.700px;color:#5d6470;transform:rotate(-90deg);transform-origin:50% 50%">1</div><div class="abs" style="left:124.2px;top:357.37px;width:1.8px;height:0.7px;background:#8a909c;"></div><div class="abs" style="left:124.8px;top:353.66999999999996px;width:0.8px;height:0.7px;background:#a5abb6;"></div><div class="abs" style="left:124.8px;top:361.07px;width:0.8px;height:0.7px;background:#a5abb6;"></div><div class="t" style="left:123.200px;top:362.70px;font-size:4.700px;color:#5d6470;transform:rotate(-90deg);transform-origin:50% 50%">0</div><div class="abs" style="left:124.2px;top:372.1px;width:1.8px;height:0.7px;background:#8a909c;"></div><div class="abs" style="left:124.8px;top:368.4px;width:0.8px;height:0.7px;background:#a5abb6;"></div><div class="abs" style="left:124.8px;top:375.8px;width:0.8px;height:0.7px;background:#a5abb6;"></div><div class="t" style="left:123.200px;top:377.43px;font-size:4.700px;color:#5d6470;transform:rotate(-90deg);transform-origin:50% 50%">1</div><div class="abs" style="left:124.2px;top:386.83000000000004px;width:1.8px;height:0.7px;background:#8a909c;"></div><div class="abs" style="left:124.8px;top:383.13px;width:0.8px;height:0.7px;background:#a5abb6;"></div><div class="abs" style="left:124.8px;top:390.53000000000003px;width:0.8px;height:0.7px;background:#a5abb6;"></div><div class="t" style="left:123.200px;top:392.16px;font-size:4.700px;color:#5d6470;transform:rotate(-90deg);transform-origin:50% 50%">2</div><div class="abs" style="left:124.2px;top:401.56px;width:1.8px;height:0.7px;background:#8a909c;"></div><div class="abs" style="left:124.8px;top:397.85999999999996px;width:0.8px;height:0.7px;background:#a5abb6;"></div><div class="abs" style="left:124.8px;top:405.26px;width:0.8px;height:0.7px;background:#a5abb6;"></div><div class="t" style="left:123.200px;top:406.89px;font-size:4.700px;color:#5d6470;transform:rotate(-90deg);transform-origin:50% 50%">3</div><div class="abs" style="left:124.2px;top:416.29px;width:1.8px;height:0.7px;background:#8a909c;"></div><div class="abs" style="left:124.8px;top:412.59px;width:0.8px;height:0.7px;background:#a5abb6;"></div><div class="abs" style="left:124.8px;top:419.99px;width:0.8px;height:0.7px;background:#a5abb6;"></div><div class="t" style="left:123.200px;top:421.62px;font-size:4.700px;color:#5d6470;transform:rotate(-90deg);transform-origin:50% 50%">4</div><div class="abs" style="left:124.2px;top:431.02000000000004px;width:1.8px;height:0.7px;background:#8a909c;"></div><div class="abs" style="left:124.8px;top:427.32px;width:0.8px;height:0.7px;background:#a5abb6;"></div><div class="abs" style="left:124.8px;top:434.72px;width:0.8px;height:0.7px;background:#a5abb6;"></div><div class="t" style="left:123.200px;top:436.35px;font-size:4.700px;color:#5d6470;transform:rotate(-90deg);transform-origin:50% 50%">5</div><div class="abs" style="left:124.2px;top:445.75px;width:1.8px;height:0.7px;background:#8a909c;"></div><div class="abs" style="left:124.8px;top:442.04999999999995px;width:0.8px;height:0.7px;background:#a5abb6;"></div><div class="abs" style="left:124.8px;top:449.45px;width:0.8px;height:0.7px;background:#a5abb6;"></div><div class="t" style="left:123.200px;top:451.08px;font-size:4.700px;color:#5d6470;transform:rotate(-90deg);transform-origin:50% 50%">6</div><div class="abs" style="left:124.2px;top:460.48px;width:1.8px;height:0.7px;background:#8a909c;"></div><div class="abs" style="left:124.8px;top:456.78px;width:0.8px;height:0.7px;background:#a5abb6;"></div><div class="abs" style="left:124.8px;top:464.18px;width:0.8px;height:0.7px;background:#a5abb6;"></div><div class="t" style="left:123.200px;top:465.81px;font-size:4.700px;color:#5d6470;transform:rotate(-90deg);transform-origin:50% 50%">7</div><div class="abs" style="left:124.2px;top:475.21000000000004px;width:1.8px;height:0.7px;background:#8a909c;"></div><div class="abs" style="left:124.8px;top:471.51px;width:0.8px;height:0.7px;background:#a5abb6;"></div><div class="abs" style="left:124.8px;top:478.91px;width:0.8px;height:0.7px;background:#a5abb6;"></div><div class="t" style="left:123.200px;top:480.54px;font-size:4.700px;color:#5d6470;transform:rotate(-90deg);transform-origin:50% 50%">8</div><div class="abs" style="left:124.2px;top:489.94000000000005px;width:1.8px;height:0.7px;background:#8a909c;"></div><div class="abs" style="left:124.8px;top:486.24px;width:0.8px;height:0.7px;background:#a5abb6;"></div><div class="abs" style="left:124.8px;top:493.64000000000004px;width:0.8px;height:0.7px;background:#a5abb6;"></div><div class="t" style="left:123.200px;top:495.27px;font-size:4.700px;color:#5d6470;transform:rotate(-90deg);transform-origin:50% 50%">9</div>
<div class="abs" style="left:194.5px;top:225px;width:500.3px;height:281.3px;background:#3c5f9e"></div>
<svg class="abs" style="left:194.5px;top:225px" width="499" height="280" viewBox="194.5 225 499 280"><rect x="194.5" y="225" width="499" height="280" fill="#e8dcd1"/><ellipse cx="234" cy="294" rx="198" ry="178" fill="#c7bea8"/><path d="M306.700 225 Q298 243 279 259 Q262 273 250 286 Q240 300 237 318 Q234 334 232 347" fill="none" stroke="#b5ab96" stroke-width="1.900" stroke-linecap="round"/><path d="M268 262 Q248 266 232 274 Q214 282 200 288" fill="none" stroke="#b5ab96" stroke-width="1.900" stroke-linecap="round"/><path d="M297.500 243 Q284 232 262 234 Q240 236 224 240" fill="none" stroke="#b5ab96" stroke-width="1.900" stroke-linecap="round"/><path d="M279 259 Q292 270 296 282" fill="none" stroke="#b5ab96" stroke-width="1.900" stroke-linecap="round"/><path d="M290 250 Q304 256 309 268" fill="none" stroke="#b5ab96" stroke-width="1.900" stroke-linecap="round"/><path d="M236 322 Q226 326 214 331" fill="none" stroke="#b5ab96" stroke-width="1.900" stroke-linecap="round"/><path d="M360 225 Q361 238 362 249" fill="none" stroke="#b5ab96" stroke-width="1.900" stroke-linecap="round"/><path d="M361 236 Q352 236 346 240" fill="none" stroke="#b5ab96" stroke-width="1.900" stroke-linecap="round"/><path d="M361.500 240 Q368 242 372 248" fill="none" stroke="#b5ab96" stroke-width="1.900" stroke-linecap="round"/><g transform="translate(213.1 243.7) rotate(-21.8)" fill="none" stroke="#b5ab96" stroke-width="1.800" stroke-linejoin="round"><path d="M-19.5 0 Q0 -13.0 19.5 0 Q0 13.0 -19.5 0Z"/><path d="M-9.8 0 L19.5 0" stroke-width="1.300"/></g><g transform="translate(231.7 247.8) rotate(-50)" fill="none" stroke="#b5ab96" stroke-width="1.800" stroke-linejoin="round"><path d="M-20.0 0 Q0 -11.8 20.0 0 Q0 11.8 -20.0 0Z"/><path d="M-10.0 0 L20.0 0" stroke-width="1.300"/></g><path d="M-16.5 0 Q0 -11.8 16.5 0 Q0 11.8 -16.5 0Z" fill="#b5ab96" transform="translate(262.5 244.5) rotate(-19.5)"/><path d="M-17.0 0 Q0 -13.0 17.0 0 Q0 13.0 -17.0 0Z" fill="#b5ab96" transform="translate(213.7 281.9) rotate(-25)"/><path d="M-14.5 0 Q0 -11.8 14.5 0 Q0 11.8 -14.5 0Z" fill="#b5ab96" transform="translate(225.5 294.7) rotate(-27.5)"/><path d="M-14.5 0 Q0 -11.8 14.5 0 Q0 11.8 -14.5 0Z" fill="#b5ab96" transform="translate(255 310.8) rotate(-75.5)"/><g transform="translate(279.8 271.6) rotate(-52)" fill="none" stroke="#b5ab96" stroke-width="1.800" stroke-linejoin="round"><path d="M-11.75 0 Q0 -10.6 11.75 0 Q0 10.6 -11.75 0Z"/><path d="M-5.9 0 L11.8 0" stroke-width="1.300"/></g><g transform="translate(292.2 295.7) rotate(-71)" fill="none" stroke="#b5ab96" stroke-width="1.800" stroke-linejoin="round"><path d="M-15.85 0 Q0 -14.2 15.85 0 Q0 14.2 -15.85 0Z"/><path d="M-7.9 0 L15.8 0" stroke-width="1.300"/></g><g transform="translate(311.8 283.3) rotate(64)" fill="none" stroke="#b5ab96" stroke-width="1.800" stroke-linejoin="round"><path d="M-19.0 0 Q0 -14.2 19.0 0 Q0 14.2 -19.0 0Z"/><path d="M-9.5 0 L19.0 0" stroke-width="1.300"/></g><g transform="translate(213.7 330.4) rotate(-22)" fill="none" stroke="#b5ab96" stroke-width="1.800" stroke-linejoin="round"><path d="M-19.0 0 Q0 -11.8 19.0 0 Q0 11.8 -19.0 0Z"/><path d="M-9.5 0 L19.0 0" stroke-width="1.300"/></g><g transform="translate(222.4 344.9) rotate(-52.5)" fill="none" stroke="#b5ab96" stroke-width="1.800" stroke-linejoin="round"><path d="M-19.5 0 Q0 -11.8 19.5 0 Q0 11.8 -19.5 0Z"/><path d="M-9.8 0 L19.5 0" stroke-width="1.300"/></g><g transform="translate(238.5 339.7) rotate(83)" fill="none" stroke="#b5ab96" stroke-width="1.800" stroke-linejoin="round"><path d="M-16.5 0 Q0 -11.8 16.5 0 Q0 11.8 -16.5 0Z"/><path d="M-8.2 0 L16.5 0" stroke-width="1.300"/></g><g transform="translate(343.4 240.6) rotate(-45)" fill="none" stroke="#b5ab96" stroke-width="1.800" stroke-linejoin="round"><path d="M-17.5 0 Q0 -11.8 17.5 0 Q0 11.8 -17.5 0Z"/><path d="M-8.8 0 L17.5 0" stroke-width="1.300"/></g><g transform="translate(376.4 253) rotate(45)" fill="none" stroke="#b5ab96" stroke-width="1.800" stroke-linejoin="round"><path d="M-14.5 0 Q0 -11.8 14.5 0 Q0 11.8 -14.5 0Z"/><path d="M-7.2 0 L14.5 0" stroke-width="1.300"/></g><g transform="translate(339 224) rotate(-5)" fill="none" stroke="#b5ab96" stroke-width="1.800" stroke-linejoin="round"><path d="M-13.0 0 Q0 -10.6 13.0 0 Q0 10.6 -13.0 0Z"/><path d="M-6.5 0 L13.0 0" stroke-width="1.300"/></g><g transform="translate(395 228) rotate(20)" fill="none" stroke="#b5ab96" stroke-width="1.800" stroke-linejoin="round"><path d="M-9.0 0 Q0 -9.4 9.0 0 Q0 9.4 -9.0 0Z"/><path d="M-4.5 0 L9.0 0" stroke-width="1.300"/></g><path d="M694.0 303.6 C690.6 303.1 679.5 300.5 673.7 300.6 C667.9 300.7 663.9 302.2 659.0 304.0 C654.1 305.8 649.1 308.1 644.2 311.4 C639.3 314.7 633.7 319.3 629.5 323.9 C625.3 328.4 622.4 333.3 619.2 338.7 C616.0 344.1 613.2 350.5 610.3 356.4 C607.4 362.3 604.3 368.6 602.0 374.2 C599.7 379.8 598.5 384.7 596.6 390.0 C594.7 395.3 592.8 401.0 590.4 406.0 C588.0 411.0 585.3 415.8 582.5 420.2 C579.7 424.6 577.1 428.8 573.6 432.6 C570.1 436.4 565.6 440.0 561.2 443.2 C556.8 446.4 551.5 449.1 547.0 452.0 C542.5 454.9 538.6 457.8 534.0 460.5 C529.4 463.2 523.9 465.1 519.5 468.4 C515.1 471.7 510.5 476.5 507.5 480.5 C504.5 484.5 502.9 488.2 501.5 492.5 C500.1 496.8 499.6 503.8 499.2 506.0 L694 506 Z" fill="#c68c7f"/><path d="M384.9 507.0 C385.2 504.2 385.7 495.2 386.5 490.0 C387.3 484.8 387.5 482.2 389.7 476.0 C391.9 469.8 394.6 459.5 399.5 453.0 C404.4 446.5 411.4 440.3 419.0 437.0 C426.6 433.7 436.3 432.5 445.0 433.0 C453.7 433.5 462.9 437.1 471.0 440.0 C479.1 442.9 487.4 448.6 493.8 450.4 C500.1 452.2 503.5 451.6 509.2 450.9 C514.9 450.2 521.4 448.5 528.0 446.0 C534.6 443.5 541.9 439.2 548.8 435.8 C555.6 432.4 563.1 428.2 569.4 425.5 C575.7 422.8 580.9 420.8 586.6 419.5 C592.3 418.2 597.7 417.4 603.8 417.5 C609.8 417.6 617.0 418.7 622.7 420.3 C628.4 421.9 633.1 424.1 638.0 427.2 C642.9 430.3 648.1 434.9 651.9 439.2 C655.6 443.5 658.1 447.8 660.5 453.0 C662.9 458.2 665.1 464.5 666.5 470.2 C667.9 475.9 668.4 481.2 669.0 487.3 C669.6 493.4 669.8 503.7 670.0 507.0" fill="none" stroke="#fdf7f0" stroke-width="1.900"/><rect x="243.300" y="329.300" width="391.500" height="27.400" fill="#ad5c4d"/><rect x="332.800" y="383" width="212.700" height="27.300" fill="#ad5c4d"/></svg>
<div class="t" style="left:327.50px;top:257.96px;font-size:9.6px;font-weight:700;font-family:'Liberation Serif',serif;color:#5c4138;transform:scaleX(0.9819);transform-origin:0 0;">ВІДОКРЕМЛЕНИЙ СТРУКТУРНИЙ ПІДРОЗДІЛ</div>
<div class="t" style="left:327.50px;top:269.16px;font-size:9.6px;font-weight:700;font-family:'Liberation Serif',serif;color:#5c4138;transform:scaleX(0.9741);transform-origin:0 0;">&quot;ФАХОВИЙ КОЛЕДЖ ЕКОНОМІКИ І ТЕХНОЛОГІЙ</div>
<div class="t" style="left:327.50px;top:280.26px;font-size:9.6px;font-weight:700;font-family:'Liberation Serif',serif;color:#5c4138;transform:scaleX(0.9749);transform-origin:0 0;">НАЦІОНАЛЬНОГО УНІВЕРСИТЕТУ &quot;ЧЕРНІГІВСЬКА</div>
<div class="t" style="left:327.50px;top:291.46px;font-size:9.6px;font-weight:700;font-family:'Liberation Serif',serif;color:#5c4138;transform:scaleX(0.9840);transform-origin:0 0;">ПОЛІТЕХНІКА&quot;</div>
<div class="t" style="left:244.00px;top:330.13px;font-size:25.4px;font-family:'Liberation Serif',serif;color:#fff;transform:scaleX(0.9770);transform-origin:0 0;">Захист звіту з технологіної практики</div>
<div class="t" style="left:333.60px;top:383.93px;font-size:25.4px;font-family:'Liberation Serif',serif;color:#fff;transform:scaleX(0.9643);transform-origin:0 0;">Ресторан «Мальва»\</div>
<div class="t" style="left:555.30px;top:437.41px;font-size:9.3px;font-weight:700;font-family:'Liberation Serif',serif;color:#4f3d3a;transform:scaleX(1.0055);transform-origin:0 0;text-shadow:.6px .6px .8px rgba(60,40,40,.55);">ВИКОНАЛА: Силенко</div>
<div class="t" style="left:555.30px;top:448.61px;font-size:9.3px;font-weight:700;font-family:'Liberation Serif',serif;color:#4f3d3a;transform:scaleX(0.9962);transform-origin:0 0;text-shadow:.6px .6px .8px rgba(60,40,40,.55);">Марина Артемівна</div>
<div class="t" style="left:555.30px;top:459.81px;font-size:9.3px;font-weight:700;font-family:'Liberation Serif',serif;color:#4f3d3a;transform:scaleX(0.9373);transform-origin:0 0;text-shadow:.6px .6px .8px rgba(60,40,40,.55);">ГРУПА: ГР-16</div>
<div class="t" style="left:555.30px;top:471.01px;font-size:9.3px;font-weight:700;font-family:'Liberation Serif',serif;color:#4f3d3a;transform:scaleX(1.0051);transform-origin:0 0;text-shadow:.6px .6px .8px rgba(60,40,40,.55);">КЕРІВНИК: А. О. Смаглюк</div>
<div class="abs" style="left:754.3px;top:204.5px;width:7.9px;height:309px;background:linear-gradient(90deg,rgba(255,255,255,.34),rgba(255,255,255,.2) 22%,rgba(255,255,255,.1) 30%,rgba(255,255,255,.12));"></div>
<div class="abs" style="left:754.9px;top:218.9px;width:7.1px;height:6.5px;background:#7e9dd2;border-radius:1px"></div>
<div class="abs" style="left:756.8px;top:221.2px;width:3px;height:1.4px;background:#4a68a4;"></div>
<div class="abs" style="left:755.3px;top:226.5px;width:6.7px;height:35.5px;background:linear-gradient(90deg,#f3f5fb,#e4e9f6 60%,#d3dcf0);border-radius:1px;box-shadow:0 0 0 .5px #9ab0d8"></div>
<div class="abs" style="left:757px;top:243px;width:3.2px;height:0.6px;background:#a9b6d0;"></div>
<div class="abs" style="left:757px;top:244.6px;width:3.2px;height:0.6px;background:#a9b6d0;"></div>
<div class="abs" style="left:754.9px;top:481.8px;width:7.1px;height:5px;background:rgba(90,120,180,.45);border-radius:1px"></div>
<div class="abs" style="left:754.9px;top:488.5px;width:7.1px;height:17px;background:rgba(210,226,250,.55);"></div>
<div class="abs" style="left:757px;top:491.6px;width:2.8px;height:1.3px;background:#1c2540;"></div>
<div class="abs" style="left:757px;top:493.2px;width:2.8px;height:1.3px;background:#1c2540;"></div>
<div class="abs" style="left:757px;top:498.8px;width:2.8px;height:1.3px;background:#1c2540;"></div>
<div class="abs" style="left:757px;top:500.4px;width:2.8px;height:1.3px;background:#1c2540;"></div>
<div class="abs" style="left:119.8px;top:511.9px;width:642.4px;height:3px;background:#a9c6ef;"></div>
<div class="abs" style="left:119.8px;top:514.8px;width:634.7px;height:14.4px;background:#fff;"></div>
<div class="abs" style="left:754.5px;top:514.8px;width:7.7px;height:14.4px;background:#9dbbea;"></div>
<div class="abs" style="left:755.3px;top:516.5px;width:6px;height:5px;background:#86a6da;border-radius:1px"></div>
<div class="abs" style="left:755.3px;top:523px;width:6px;height:5px;background:#86a6da;border-radius:1px"></div>
<div class="t" style="left:125.90px;top:520.20px;font-size:10.4px;color:#1a1a1a;transform:scaleX(1.0091);transform-origin:0 0;">Заметки к слайду</div>
<div class="abs" style="left:646.7px;top:500.3px;width:97.3px;height:11.4px;background:#fdfdfd;box-shadow:0 0 0 .5px #c9cdd6"></div>
<div class="t" style="left:661.00px;top:503.43px;font-size:5.4px;color:#30343c;transform:scaleX(1.0552);transform-origin:0 0;">UK Українська (Україна)</div>
<div class="abs" style="left:739px;top:503px;width:2px;height:1px;background:#555;"></div>
<div class="abs" style="left:739px;top:507.5px;width:2px;height:1px;background:#555;"></div>
<div class="abs" style="left:6px;top:529.8px;width:756px;height:10.2px;background:linear-gradient(#dbe8fa,#c6daf6 45%,#b4cdf0 55%,#c9dcf6);"></div>
<div class="t" style="left:9.00px;top:532.13px;font-size:5.4px;color:#25417c;transform:scaleX(0.9311);transform-origin:0 0;">Слайд 1 из 7</div>
<div class="t" style="left:46.40px;top:532.13px;font-size:5.4px;color:#25417c;transform:scaleX(0.9523);transform-origin:0 0;">&quot;Пользовательская&quot;</div>
<div class="abs" style="left:639.5px;top:531.3px;width:8px;height:7.4px;background:#f7d27a;border:0.5px solid #c89a3a;box-sizing:border-box"></div>
<div class="abs" style="left:641.3px;top:533px;width:4.4px;height:3.6px;background:#fff;border:0.5px solid #6a7690;box-sizing:border-box"></div>
<svg class="abs" style="left:649.500px;top:532.300px" width="7" height="6" viewBox="0 0 7 6"><g fill="#6d7b98"><rect x=".5" y=".5" width="2.500" height="2"/><rect x="4" y=".5" width="2.500" height="2"/><rect x=".5" y="3.500" width="2.500" height="2"/><rect x="4" y="3.500" width="2.500" height="2"/></g></svg>
<svg class="abs" style="left:658.500px;top:532px" width="8" height="7" viewBox="0 0 8 7"><rect x=".6" y=".6" width="6.800" height="3.800" fill="#f4f7fc" stroke="#56668a" stroke-width=".7"/><path d="M4 4.500 L4 6.500 M2 6.500 L6 6.500" stroke="#56668a" stroke-width=".7"/></svg>
<div class="t" style="left:669.70px;top:532.50px;font-size:5.2px;color:#25417c;transform:scaleX(0.8455);transform-origin:0 0;">78%</div>
<div class="abs" style="left:683.500px;top:531.600px;width:6.400px;height:6.400px;border-radius:4px;border:0.6px solid #5a74a8;box-sizing:border-box;background:#e9f1fc"></div>
<div class="abs" style="left:685.2px;top:534.5px;width:3px;height:0.7px;background:#3c5688;"></div>
<div class="abs" style="left:692px;top:534.6px;width:49px;height:0.8px;background:#8fa7d0;"></div>
<div class="abs" style="left:709.5px;top:531.8px;width:2.4px;height:5.8px;background:#eef3fb;border:0.5px solid #6a80ad;box-sizing:border-box"></div>
<div class="abs" style="left:742px;top:531.600px;width:6.400px;height:6.400px;border-radius:4px;border:0.6px solid #5a74a8;box-sizing:border-box;background:#e9f1fc"></div>
<div class="abs" style="left:743.7px;top:534.5px;width:3px;height:0.7px;background:#3c5688;"></div>
<div class="abs" style="left:744.85px;top:533.3px;width:0.7px;height:3px;background:#3c5688;"></div>
<svg class="abs" style="left:752.500px;top:531.500px" width="8" height="7" viewBox="0 0 8 7"><rect x=".5" y=".5" width="7" height="6" fill="#eef3fb" stroke="#5a6f9a" stroke-width=".6"/><path d="M2 2 L6 5 M6 2 L2 5" stroke="#5a6f9a" stroke-width=".6"/></svg></div>
<svg width="0" height="0" style="position:absolute"><defs><linearGradient id="hg" x1="0" y1="0" x2="0" y2="1"><stop offset="0" stop-color="#fdc62f"/><stop offset="1" stop-color="#f7a51c"/></linearGradient><filter id="b1" x="-20%" y="-20%" width="140%" height="140%"><feGaussianBlur stdDeviation="1.200"/></filter><filter id="b15" x="-20%" y="-20%" width="140%" height="140%"><feGaussianBlur stdDeviation="1.700"/></filter><filter id="b2" x="-20%" y="-20%" width="140%" height="140%"><feGaussianBlur stdDeviation="2.500"/></filter><filter id="b05" x="-20%" y="-20%" width="140%" height="140%"><feGaussianBlur stdDeviation="0.600"/></filter></defs></svg>
<svg class="abs" style="left:788px;top:114px" width="160" height="90" viewBox="0 0 160 90"><defs><clipPath id="c1"><rect width="160" height="90" rx="4.500"/></clipPath><linearGradient id="w1" x1="0" y1="0" x2="1" y2="0"><stop offset="0" stop-color="#90706a"/><stop offset="0.350" stop-color="#aa8980"/><stop offset="0.700" stop-color="#c3a297"/><stop offset="1" stop-color="#c9aa9f"/></linearGradient></defs><g clip-path="url(#c1)"><rect width="160" height="90" fill="url(#w1)"/><g filter="url(#b1)"><rect x="58" y="-3" width="29" height="13.500" fill="#cfcdcb"/><rect x="55.500" y="-2" width="2.600" height="70" fill="#7b593e"/><ellipse cx="57" cy="15.500" rx="3.600" ry="8.500" fill="#c9a236"/><rect x="64" y="33" width="10" height="24" fill="#6b4a38"/><ellipse cx="44" cy="52" rx="17" ry="15" fill="#4d3b39"/><ellipse cx="62" cy="58" rx="14" ry="9" fill="#56423f"/><ellipse cx="36" cy="46" rx="6" ry="5" fill="#6a3a34"/><ellipse cx="50" cy="48" rx="6" ry="6" fill="#5c5a40"/><ellipse cx="40" cy="42" rx="7" ry="5" fill="#7a5a50"/><ellipse cx="44" cy="58" rx="5" ry="3" fill="#9a3a40"/><ellipse cx="37" cy="62" rx="4" ry="6" fill="#b9bcc8"/><ellipse cx="68" cy="60" rx="7" ry="7" fill="#5a5466"/><ellipse cx="58" cy="64" rx="6" ry="4" fill="#c8b8c0"/><rect x="26" y="66" width="60" height="26" fill="#5b4a48"/><rect x="126" y="66" width="40" height="30" fill="#8d5c42"/><ellipse cx="148" cy="63" rx="8" ry="10" fill="#d9c9a2"/><ellipse cx="135" cy="60" rx="5" ry="6" fill="#d6a9b4"/><ellipse cx="158" cy="62" rx="4" ry="6" fill="#c9b47c"/></g><g filter="url(#b15)"><path d="M73 60 Q70 30 84 14 Q98 2 116 6 Q134 12 137 34 Q139 50 133 66 L120 40 L92 36 L82 62 Z" fill="#231c1f"/><path d="M81 50 Q80 30 92 25 Q106 19 122 25 Q132 30 131 50 Q130 70 120 82 Q112 92 104 92 Q92 90 86 76 Q81 64 81 50Z" fill="#d3ada1"/><ellipse cx="96" cy="40" rx="10" ry="9" fill="#e3c8be"/><ellipse cx="93" cy="51.500" rx="5" ry="1.800" fill="#4a3436"/><ellipse cx="120" cy="51.500" rx="5" ry="1.800" fill="#4a3436"/><path d="M88 47 L99 46.500 M114 46.500 L126 47.500" stroke="#3a2a2c" stroke-width="1.600" fill="none"/><ellipse cx="108" cy="64" rx="3.500" ry="6" fill="#c79a90"/><ellipse cx="110" cy="78" rx="6" ry="1.600" fill="#a86a6c"/><path d="M120 84 L126 78 L146 92 L116 92 Z" fill="#d9d9e2"/><path d="M124 81 L142 92" stroke="#30344a" stroke-width="1.500"/></g><rect x="0" y="88.500" width="130" height="2" fill="#30364c" filter="url(#b05)"/></g></svg>
<div class="abs" style="left:948px;top:204px;width:159px;height:90px;background:#1e1f21"></div>
<svg class="abs" style="left:968px;top:204px" width="120" height="90" viewBox="0 0 120 90"><defs><clipPath id="c2"><rect width="120" height="90"/></clipPath><linearGradient id="w2" x1="0" y1="0" x2="1" y2="0"><stop offset="0" stop-color="#f0eeea"/><stop offset="0.250" stop-color="#f6f4f0"/><stop offset="0.700" stop-color="#e4e2dc"/><stop offset="1" stop-color="#d9d8d2"/></linearGradient></defs><g clip-path="url(#c2)"><rect width="120" height="90" fill="url(#w2)"/><g filter="url(#b1)"><rect x="0" y="0" width="8" height="50" fill="#c9c8d2"/><path d="M81.500 -2 L122 -2 L122 26 L82.500 31 Z" fill="#b9a76c"/><path d="M84.500 -2 L122 -2 L122 23 L85 27.500 Z" fill="#cdd9c6"/><ellipse cx="104" cy="12" rx="10" ry="6" fill="#d9d2b8"/><path d="M34 30 Q30 8 44 -2 L66 -2 Q76 8 76 30 Q80 46 92 62 L60 70 L30 66 Q36 48 34 30Z" fill="#9c7655"/><path d="M25 48 Q29 20 36 4 Q24 14 20 46Z" fill="#fffefb"/><path d="M38 22 Q38 4 50 4 Q64 4 64.500 22 Q64.500 38 52 44 Q40 40 38 22Z" fill="#c9a08f"/><ellipse cx="50" cy="16" rx="9" ry="6" fill="#d4ae9c"/><path d="M40 21 L47 20 M55 20 L62 21.500" stroke="#6a4a40" stroke-width="1.500" fill="none"/><ellipse cx="51" cy="35" rx="4" ry="1.400" fill="#a86a66"/><path d="M32 58 Q40 44 52 44 Q62 44 76 50 L82 70 L30 72Z" fill="#c39b88"/><path d="M0 52 Q10 38 26 42 Q36 48 33 70 L0 72Z" fill="#8e7a68"/><ellipse cx="12" cy="58" rx="9" ry="9" fill="#7c6c5e"/><path d="M56 92 L58 60 Q66 52 78 56 L88 54 Q99 57 100 70 Q98 80 90 82 L88 92Z" fill="#17181a"/><path d="M84 54 Q98 52 108 70 L122 86 L122 92 L96 92 Q100 74 84 54Z" fill="#c8a08e"/><path d="M22 70 L60 66 L60 92 L22 92Z" fill="#b99886"/><path d="M64 40 Q68 56 80 62 L72 68 Q62 58 60 44Z" fill="#96704f"/></g><rect x="30" y="88.600" width="60" height="1.600" fill="#e6dc72"/></g></svg>
<svg class="abs" style="left:832px;top:303px" width="72" height="72" viewBox="0 0 72 72"><defs><clipPath id="c3"><rect width="72" height="72" rx="8"/></clipPath></defs><g clip-path="url(#c3)"><rect width="72" height="72" fill="#2a3021"/><g filter="url(#b2)"><rect x="0" y="0" width="72" height="15" fill="#4c5b37"/><ellipse cx="60" cy="7" rx="14" ry="8" fill="#65734b"/><ellipse cx="32" cy="23" rx="20" ry="8" fill="#8c9557"/><ellipse cx="60" cy="42" rx="14" ry="26" fill="#23281b"/><ellipse cx="10" cy="46" rx="14" ry="22" fill="#2c321e"/></g><g filter="url(#b1)"><ellipse cx="12" cy="21" rx="8" ry="5" fill="#262c1b"/><ellipse cx="50" cy="10" rx="7" ry="4" fill="#2f3a22"/><ellipse cx="24" cy="8" rx="9" ry="4" fill="#5d6c41"/><ellipse cx="20" cy="40" rx="7" ry="5" fill="#4a5531"/><ellipse cx="8" cy="56" rx="7" ry="6" fill="#1d2216"/><ellipse cx="50" cy="28" rx="6" ry="5" fill="#4b5534"/><ellipse cx="62" cy="30" rx="6" ry="4" fill="#7d7367"/><ellipse cx="66" cy="44" rx="4" ry="4" fill="#5f5a4c"/><ellipse cx="52" cy="56" rx="8" ry="7" fill="#1c2115"/><ellipse cx="22" cy="62" rx="8" ry="6" fill="#272d1c"/><ellipse cx="42" cy="22" rx="7" ry="3" fill="#a0a468"/></g><g filter="url(#b05)"><path d="M28 37 Q33 31 38 33 L44 37 Q46 45 42 53 L36 58 L33 66 L29 66 L30 54 Q26 45 28 37Z" fill="#c5b0a2"/><path d="M36 36 Q43 37 44 45 Q42 53 37 52 Q34 44 36 36Z" fill="#9e6c5a"/><ellipse cx="38" cy="33.500" rx="3.800" ry="4" fill="#141414"/><rect x="29.500" y="50" width="4.500" height="18" fill="#b7b2a8"/></g></g></svg>
<svg class="abs" style="left:832px;top:393px" width="72" height="72" viewBox="0 0 72 72"><defs><clipPath id="c4"><rect width="72" height="72" rx="8"/></clipPath><linearGradient id="w4" x1="0" y1="0" x2="0" y2="1"><stop offset="0" stop-color="#8e775c"/><stop offset="0.350" stop-color="#a8947a"/><stop offset="0.700" stop-color="#b5a590"/><stop offset="1" stop-color="#9c8c78"/></linearGradient></defs><g clip-path="url(#c4)"><rect width="72" height="72" fill="url(#w4)"/><g filter="url(#b1)"><path d="M13 8 Q20 14 26 38 L22 40 Q16 24 13 8Z" fill="#c9aaba"/><path d="M64 6 Q58 14 54 38 L58 40 Q62 24 64 6Z" fill="#c9aaba"/><path d="M16 10 Q24 22 28 36" stroke="#b8c8e0" stroke-width="1.200" fill="none"/><path d="M60 10 Q56 22 54 36" stroke="#d8b8d0" stroke-width="1.200" fill="none"/><path d="M0 30 L8 30 L18 36 L28 36 L18 42 L0 42Z" fill="#2a2428"/><ellipse cx="6" cy="30" rx="4" ry="3" fill="#b06a68"/><path d="M0 44 Q20 40 40 46 L40 56 Q20 60 0 58Z" fill="#dcd0bc"/><rect x="0" y="57" width="30" height="16" fill="#a08c70"/><rect x="58" y="36" width="16" height="36" fill="#c9bda8"/><path d="M16 50 L34 46 L34 50 L18 53Z" fill="#b9a4a8"/></g><g filter="url(#b05)"><path d="M30 19 Q30 11 38 11 Q47 11 47 20 Q48 26 51 31 Q56 40 55 52 Q57 60 55 66 L43 66 L44 54 L37 52 L35 58 L31 58 Q31 44 33 34 Q32 28 33 27 Q30 24 30 19Z" fill="#eee6db"/><ellipse cx="38.500" cy="19.500" rx="8.300" ry="8" fill="#f3ece3"/><path d="M46 52 Q55 54 55 64 L46 66Z" fill="#e2d8cb"/><ellipse cx="35" cy="22" rx="2.500" ry="1.200" fill="#bfaeb0"/><path d="M44 13 L48 14 L47 18Z" fill="#e8c8c8"/></g></g></svg>
<div class="abs" style="left:848.500px;top:482.500px;width:39px;height:72px;border-radius:8px;background:#000"></div>
<div class="abs" style="left:1152.500px;top:482.500px;width:72px;height:72px;border-radius:8px;background:#000"></div>
<div class="abs" style="left:1107px;top:203.300px;width:158.500px;height:87.500px;border:2px solid #22dd8d;border-radius:3px"></div>
<svg class="abs" style="left:795.5px;top:119.5px" width="21" height="25" viewBox="0 0 21 25"><path d="M0.700 7 Q0.700 5.200 2.100 5.200 Q3.300 5.200 3.400 6.600 L3.400 3 Q3.400 1.400 4.900 1.400 Q6.400 1.400 6.400 3 L6.400 2 Q6.400 0.400 8 0.400 Q9.600 0.400 9.600 2 L9.600 3.200 Q9.600 1.700 11.200 1.700 Q12.800 1.700 12.800 3.300 L12.800 12.200 Q15 11.800 17.300 10.300 Q19.300 9.200 20 10.300 Q20.600 11.500 18.800 12.700 Q16 15 14.200 18 Q12.500 20.800 11.600 23.900 L3.400 23.900 Q2.300 21.500 1.400 18.800 Q0.700 16.500 0.700 14 Z" fill="url(#hg)"/></svg>
<svg class="abs" style="left:955.5px;top:119.5px" width="21" height="25" viewBox="0 0 21 25"><path d="M0.700 7 Q0.700 5.200 2.100 5.200 Q3.300 5.200 3.400 6.600 L3.400 3 Q3.400 1.400 4.900 1.400 Q6.400 1.400 6.400 3 L6.400 2 Q6.400 0.400 8 0.400 Q9.600 0.400 9.600 2 L9.600 3.200 Q9.600 1.700 11.200 1.700 Q12.800 1.700 12.800 3.300 L12.800 12.200 Q15 11.800 17.300 10.300 Q19.300 9.200 20 10.300 Q20.600 11.500 18.800 12.700 Q16 15 14.200 18 Q12.500 20.800 11.600 23.900 L3.400 23.900 Q2.300 21.500 1.400 18.800 Q0.700 16.500 0.700 14 Z" fill="url(#hg)"/></svg>
<svg class="abs" style="left:1115.5px;top:119.5px" width="21" height="25" viewBox="0 0 21 25"><path d="M0.700 7 Q0.700 5.200 2.100 5.200 Q3.300 5.200 3.400 6.600 L3.400 3 Q3.400 1.400 4.900 1.400 Q6.400 1.400 6.400 3 L6.400 2 Q6.400 0.400 8 0.400 Q9.600 0.400 9.600 2 L9.600 3.200 Q9.600 1.700 11.200 1.700 Q12.800 1.700 12.800 3.300 L12.800 12.200 Q15 11.800 17.300 10.300 Q19.300 9.200 20 10.300 Q20.600 11.500 18.800 12.700 Q16 15 14.200 18 Q12.500 20.800 11.600 23.900 L3.400 23.900 Q2.300 21.500 1.400 18.800 Q0.700 16.500 0.700 14 Z" fill="url(#hg)"/></svg>
<svg class="abs" style="left:795.5px;top:209.5px" width="21" height="25" viewBox="0 0 21 25"><path d="M0.700 7 Q0.700 5.200 2.100 5.200 Q3.300 5.200 3.400 6.600 L3.400 3 Q3.400 1.400 4.900 1.400 Q6.400 1.400 6.400 3 L6.400 2 Q6.400 0.400 8 0.400 Q9.600 0.400 9.600 2 L9.600 3.200 Q9.600 1.700 11.200 1.700 Q12.800 1.700 12.800 3.300 L12.800 12.200 Q15 11.800 17.300 10.300 Q19.300 9.200 20 10.300 Q20.600 11.500 18.800 12.700 Q16 15 14.200 18 Q12.500 20.800 11.600 23.900 L3.400 23.900 Q2.300 21.500 1.400 18.800 Q0.700 16.500 0.700 14 Z" fill="url(#hg)"/></svg>
<div class="t" style="left:964.70px;top:152.46px;font-size:16px;font-weight:700;color:#fff;transform:scaleX(1.0556);transform-origin:0 0;">Ратозій Руслан</div>
<div class="t" style="left:1114.00px;top:152.46px;font-size:16px;font-weight:700;color:#fff;transform:scaleX(1.0883);transform-origin:0 0;">София  Жуковс...</div>
<div class="t" style="left:798.60px;top:242.46px;font-size:16px;font-weight:700;color:#fff;transform:scaleX(1.0992);transform-origin:0 0;">Сімович Матвій</div>
<div class="t" style="left:1115.30px;top:242.46px;font-size:16px;font-weight:700;color:#fff;transform:scaleX(1.1245);transform-origin:0 0;">Ніколаєнко  Ка...</div>
<div class="t" style="left:952.00px;top:332.46px;font-size:16px;font-weight:700;color:#fff;transform:scaleX(1.0946);transform-origin:0 0;">Оліферчук  Оле...</div>
<div class="t" style="left:1115.30px;top:332.46px;font-size:16px;font-weight:700;color:#fff;transform:scaleX(1.1102);transform-origin:0 0;">Набатнікова  А...</div>
<div class="t" style="left:976.50px;top:422.46px;font-size:16px;font-weight:700;color:#fff;transform:scaleX(1.1004);transform-origin:0 0;">Копил Юлія</div>
<div class="t" style="left:1117.40px;top:422.46px;font-size:16px;font-weight:700;color:#fff;transform:scaleX(1.0933);transform-origin:0 0;">Писаренко  Со...</div>
<div class="t" style="left:954.00px;top:512.46px;font-size:16px;font-weight:700;color:#fff;transform:scaleX(1.1112);transform-origin:0 0;">Авраменко  Ол...</div>
<div class="abs pill" style="left:790.6px;top:182px;width:106.4px"></div><div class="t" style="left:794.20px;top:185.70px;font-size:13px;color:#ececec;transform:scaleX(0.9587);transform-origin:0 0;">Силенко Марина</div>
<div class="abs pill" style="left:950.3px;top:182px;width:111.7px"></div><svg class="abs" style="left:952.9px;top:184.5px" width="14" height="15" viewBox="0 0 14 15"><g fill="#f04a50"><rect x="4.100" y="0.900" width="6.200" height="9.300" rx="3.100"/><path d="M2.300 6.600 L3.900 6.600 Q3.900 10.300 7.200 10.300 Q10.500 10.300 10.500 6.600 L12.100 6.600 Q12.100 11.200 8.100 11.800 L8.100 12.500 L10.600 12.500 L10.600 14.200 L3.800 14.200 L3.800 12.500 L6.300 12.500 L6.300 11.800 Q2.300 11.200 2.300 6.600Z"/></g><path d="M0.800 14 L13.500 0.900" stroke="#22252a" stroke-width="2.800"/><path d="M0.300 14.400 L13.900 0.400" stroke="#f04a50" stroke-width="1.250" stroke-linecap="round"/></svg><div class="t" style="left:972.10px;top:185.70px;font-size:13px;color:#ececec;transform:scaleX(0.9341);transform-origin:0 0;">Ратозій Руслан</div>
<div class="abs pill" style="left:1110px;top:182px;width:129.4px"></div><svg class="abs" style="left:1112.6px;top:184.5px" width="14" height="15" viewBox="0 0 14 15"><g fill="#f04a50"><rect x="4.100" y="0.900" width="6.200" height="9.300" rx="3.100"/><path d="M2.300 6.600 L3.900 6.600 Q3.900 10.300 7.200 10.300 Q10.500 10.300 10.500 6.600 L12.100 6.600 Q12.100 11.200 8.100 11.800 L8.100 12.500 L10.600 12.500 L10.600 14.200 L3.800 14.200 L3.800 12.500 L6.300 12.500 L6.300 11.800 Q2.300 11.200 2.300 6.600Z"/></g><path d="M0.800 14 L13.500 0.900" stroke="#22252a" stroke-width="2.800"/><path d="M0.300 14.400 L13.900 0.400" stroke="#f04a50" stroke-width="1.250" stroke-linecap="round"/></svg><div class="t" style="left:1131.80px;top:185.70px;font-size:13px;color:#ececec;transform:scaleX(0.9351);transform-origin:0 0;">София Жуковская</div>
<div class="abs pill" style="left:790.6px;top:272px;width:118.3px"></div><svg class="abs" style="left:793.2px;top:274.5px" width="14" height="15" viewBox="0 0 14 15"><g fill="#f04a50"><rect x="4.100" y="0.900" width="6.200" height="9.300" rx="3.100"/><path d="M2.300 6.600 L3.900 6.600 Q3.900 10.300 7.200 10.300 Q10.500 10.300 10.500 6.600 L12.100 6.600 Q12.100 11.200 8.100 11.800 L8.100 12.500 L10.600 12.500 L10.600 14.200 L3.800 14.200 L3.800 12.500 L6.300 12.500 L6.300 11.800 Q2.300 11.200 2.300 6.600Z"/></g><path d="M0.800 14 L13.500 0.900" stroke="#22252a" stroke-width="2.800"/><path d="M0.300 14.400 L13.900 0.400" stroke="#f04a50" stroke-width="1.250" stroke-linecap="round"/></svg><div class="t" style="left:812.40px;top:275.70px;font-size:13px;color:#ececec;transform:scaleX(0.9784);transform-origin:0 0;">Сімович Матвій</div>
<div class="abs pill" style="left:950.3px;top:272px;width:94.1px"></div><div class="t" style="left:953.90px;top:275.70px;font-size:13px;color:#ececec;transform:scaleX(0.9523);transform-origin:0 0;">Аліна Смаглюк</div>
<div class="abs pill" style="left:1110px;top:272px;width:137.4px"></div><svg class="abs" style="left:1112.6px;top:274.5px" width="14" height="15" viewBox="0 0 14 15"><g fill="#f04a50"><rect x="4.100" y="0.900" width="6.200" height="9.300" rx="3.100"/><path d="M2.300 6.600 L3.900 6.600 Q3.900 10.300 7.200 10.300 Q10.500 10.300 10.500 6.600 L12.100 6.600 Q12.100 11.200 8.100 11.800 L8.100 12.500 L10.600 12.500 L10.600 14.200 L3.800 14.200 L3.800 12.500 L6.300 12.500 L6.300 11.800 Q2.300 11.200 2.300 6.600Z"/></g><path d="M0.800 14 L13.500 0.900" stroke="#22252a" stroke-width="2.800"/><path d="M0.300 14.400 L13.900 0.400" stroke="#f04a50" stroke-width="1.250" stroke-linecap="round"/></svg><div class="t" style="left:1131.80px;top:275.70px;font-size:13px;color:#ececec;transform:scaleX(0.9731);transform-origin:0 0;">Ніколаєнко Карина</div>
<div class="abs pill" style="left:790.6px;top:362px;width:118.3px"></div><svg class="abs" style="left:793.2px;top:364.5px" width="14" height="15" viewBox="0 0 14 15"><g fill="#f04a50"><rect x="4.100" y="0.900" width="6.200" height="9.300" rx="3.100"/><path d="M2.300 6.600 L3.900 6.600 Q3.900 10.300 7.200 10.300 Q10.500 10.300 10.500 6.600 L12.100 6.600 Q12.100 11.200 8.100 11.800 L8.100 12.500 L10.600 12.500 L10.600 14.200 L3.800 14.200 L3.800 12.500 L6.300 12.500 L6.300 11.800 Q2.300 11.200 2.300 6.600Z"/></g><path d="M0.800 14 L13.500 0.900" stroke="#22252a" stroke-width="2.800"/><path d="M0.300 14.400 L13.900 0.400" stroke="#f04a50" stroke-width="1.250" stroke-linecap="round"/></svg><div class="t" style="left:812.40px;top:365.70px;font-size:13px;color:#ececec;transform:scaleX(0.9566);transform-origin:0 0;">Вероніка Іовова</div>
<div class="abs pill" style="left:950.3px;top:362px;width:159.7px"></div><svg class="abs" style="left:952.9px;top:364.5px" width="14" height="15" viewBox="0 0 14 15"><g fill="#f04a50"><rect x="4.100" y="0.900" width="6.200" height="9.300" rx="3.100"/><path d="M2.300 6.600 L3.900 6.600 Q3.900 10.300 7.200 10.300 Q10.500 10.300 10.500 6.600 L12.100 6.600 Q12.100 11.200 8.100 11.800 L8.100 12.500 L10.600 12.500 L10.600 14.200 L3.800 14.200 L3.800 12.500 L6.300 12.500 L6.300 11.800 Q2.300 11.200 2.300 6.600Z"/></g><path d="M0.800 14 L13.500 0.900" stroke="#22252a" stroke-width="2.800"/><path d="M0.300 14.400 L13.900 0.400" stroke="#f04a50" stroke-width="1.250" stroke-linecap="round"/></svg><div class="t" style="left:972.10px;top:365.70px;font-size:13px;color:#ececec;transform:scaleX(0.9424);transform-origin:0 0;">Оліферчук Олександра</div>
<div class="abs pill" style="left:1110px;top:362px;width:157.3px"></div><svg class="abs" style="left:1112.6px;top:364.5px" width="14" height="15" viewBox="0 0 14 15"><g fill="#f04a50"><rect x="4.100" y="0.900" width="6.200" height="9.300" rx="3.100"/><path d="M2.300 6.600 L3.900 6.600 Q3.900 10.300 7.200 10.300 Q10.500 10.300 10.500 6.600 L12.100 6.600 Q12.100 11.200 8.100 11.800 L8.100 12.500 L10.600 12.500 L10.600 14.200 L3.800 14.200 L3.800 12.500 L6.300 12.500 L6.300 11.800 Q2.300 11.200 2.300 6.600Z"/></g><path d="M0.800 14 L13.500 0.900" stroke="#22252a" stroke-width="2.800"/><path d="M0.300 14.400 L13.900 0.400" stroke="#f04a50" stroke-width="1.250" stroke-linecap="round"/></svg><div class="t" style="left:1131.80px;top:365.70px;font-size:13px;color:#ececec;transform:scaleX(0.9594);transform-origin:0 0;">Набатнікова Анастасія</div>
<div class="abs pill" style="left:790.6px;top:452px;width:125.5px"></div><svg class="abs" style="left:793.2px;top:454.5px" width="14" height="15" viewBox="0 0 14 15"><g fill="#f04a50"><rect x="4.100" y="0.900" width="6.200" height="9.300" rx="3.100"/><path d="M2.300 6.600 L3.900 6.600 Q3.900 10.300 7.200 10.300 Q10.500 10.300 10.500 6.600 L12.100 6.600 Q12.100 11.200 8.100 11.800 L8.100 12.500 L10.600 12.500 L10.600 14.200 L3.800 14.200 L3.800 12.500 L6.300 12.500 L6.300 11.800 Q2.300 11.200 2.300 6.600Z"/></g><path d="M0.800 14 L13.500 0.900" stroke="#22252a" stroke-width="2.800"/><path d="M0.300 14.400 L13.900 0.400" stroke="#f04a50" stroke-width="1.250" stroke-linecap="round"/></svg><div class="t" style="left:812.40px;top:455.70px;font-size:13px;color:#ececec;transform:scaleX(0.9623);transform-origin:0 0;">Ангелина Пикуль</div>
<div class="abs pill" style="left:950.3px;top:452px;width:94.1px"></div><svg class="abs" style="left:952.9px;top:454.5px" width="14" height="15" viewBox="0 0 14 15"><g fill="#f04a50"><rect x="4.100" y="0.900" width="6.200" height="9.300" rx="3.100"/><path d="M2.300 6.600 L3.900 6.600 Q3.900 10.300 7.200 10.300 Q10.500 10.300 10.500 6.600 L12.100 6.600 Q12.100 11.200 8.100 11.800 L8.100 12.500 L10.600 12.500 L10.600 14.200 L3.800 14.200 L3.800 12.500 L6.300 12.500 L6.300 11.800 Q2.300 11.200 2.300 6.600Z"/></g><path d="M0.800 14 L13.500 0.900" stroke="#22252a" stroke-width="2.800"/><path d="M0.300 14.400 L13.900 0.400" stroke="#f04a50" stroke-width="1.250" stroke-linecap="round"/></svg><div class="t" style="left:972.10px;top:455.70px;font-size:13px;color:#ececec;transform:scaleX(0.9621);transform-origin:0 0;">Копил Юлія</div>
<div class="abs pill" style="left:1110px;top:452px;width:127.3px"></div><svg class="abs" style="left:1112.6px;top:454.5px" width="14" height="15" viewBox="0 0 14 15"><g fill="#f04a50"><rect x="4.100" y="0.900" width="6.200" height="9.300" rx="3.100"/><path d="M2.300 6.600 L3.900 6.600 Q3.900 10.300 7.200 10.300 Q10.500 10.300 10.500 6.600 L12.100 6.600 Q12.100 11.200 8.100 11.800 L8.100 12.500 L10.600 12.500 L10.600 14.200 L3.800 14.200 L3.800 12.500 L6.300 12.500 L6.300 11.800 Q2.300 11.200 2.300 6.600Z"/></g><path d="M0.800 14 L13.500 0.900" stroke="#22252a" stroke-width="2.800"/><path d="M0.300 14.400 L13.900 0.400" stroke="#f04a50" stroke-width="1.250" stroke-linecap="round"/></svg><div class="t" style="left:1131.80px;top:455.70px;font-size:13px;color:#ececec;transform:scaleX(0.9528);transform-origin:0 0;">Писаренко Софія</div>
<div class="abs pill" style="left:790.6px;top:542px;width:110.9px"></div><svg class="abs" style="left:793.2px;top:544.5px" width="14" height="15" viewBox="0 0 14 15"><g fill="#f04a50"><rect x="4.100" y="0.900" width="6.200" height="9.300" rx="3.100"/><path d="M2.300 6.600 L3.900 6.600 Q3.900 10.300 7.200 10.300 Q10.500 10.300 10.500 6.600 L12.100 6.600 Q12.100 11.200 8.100 11.800 L8.100 12.500 L10.600 12.500 L10.600 14.200 L3.800 14.200 L3.800 12.500 L6.300 12.500 L6.300 11.800 Q2.300 11.200 2.300 6.600Z"/></g><path d="M0.800 14 L13.500 0.900" stroke="#22252a" stroke-width="2.800"/><path d="M0.300 14.400 L13.900 0.400" stroke="#f04a50" stroke-width="1.250" stroke-linecap="round"/></svg><div class="t" style="left:812.40px;top:545.70px;font-size:13px;color:#ececec;transform:scaleX(0.9741);transform-origin:0 0;">anna gorodnya</div>
<div class="abs pill" style="left:950.3px;top:542px;width:112.7px"></div><div class="t" style="left:953.90px;top:545.70px;font-size:13px;color:#ececec;transform:scaleX(0.9565);transform-origin:0 0;">Авраменко Олена</div>
<div class="abs pill" style="left:1110px;top:542px;width:123.6px"></div><svg class="abs" style="left:1112.6px;top:544.5px" width="14" height="15" viewBox="0 0 14 15"><g fill="#f04a50"><rect x="4.100" y="0.900" width="6.200" height="9.300" rx="3.100"/><path d="M2.300 6.600 L3.900 6.600 Q3.900 10.300 7.200 10.300 Q10.500 10.300 10.500 6.600 L12.100 6.600 Q12.100 11.200 8.100 11.800 L8.100 12.500 L10.600 12.500 L10.600 14.200 L3.800 14.200 L3.800 12.500 L6.300 12.500 L6.300 11.800 Q2.300 11.200 2.300 6.600Z"/></g><path d="M0.800 14 L13.500 0.900" stroke="#22252a" stroke-width="2.800"/><path d="M0.300 14.400 L13.900 0.400" stroke="#f04a50" stroke-width="1.250" stroke-linecap="round"/></svg><div class="t" style="left:1131.80px;top:545.70px;font-size:13px;color:#ececec;transform:scaleX(0.9697);transform-origin:0 0;">Лена Авраменко</div>
<div id="toolbar" class="abs"></div>
<svg class="abs" style="left:44px;top:631px" width="17" height="26" viewBox="0 0 17 26"><rect x="5" y="1.500" width="6.600" height="14" rx="3.300" fill="none" stroke="#f2f2f2" stroke-width="1.500"/><path d="M1.800 11.500 Q1.800 18.500 8.300 18.500 Q14.800 18.500 14.800 11.500 M8.300 18.500 L8.300 23.700 M4.300 23.900 L12.300 23.900" fill="none" stroke="#f2f2f2" stroke-width="1.500" stroke-linecap="round"/></svg>
<svg class="abs" style="left:79px;top:640px" width="10" height="7" viewBox="0 0 10 7"><path d="M1.500 5.300 L5 1.800 L8.500 5.300" fill="none" stroke="#f0f0f0" stroke-width="1.500" stroke-linecap="round" stroke-linejoin="round"/></svg>
<div class="t" style="left:40.00px;top:661.64px;font-size:12px;font-weight:700;color:#f4f4f4;transform:scaleX(0.9166);transform-origin:0 0;">Звук</div>
<svg class="abs" style="left:132px;top:637px" width="26" height="16" viewBox="0 0 26 16"><rect x="1" y="1.200" width="15.600" height="12.800" rx="3.200" fill="none" stroke="#f2f2f2" stroke-width="1.500"/><path d="M19 6 L24 2.700 L24 12.500 L19 9.200 Z" fill="none" stroke="#f2f2f2" stroke-width="1.400" stroke-linejoin="round"/></svg>
<svg class="abs" style="left:177px;top:640px" width="10" height="7" viewBox="0 0 10 7"><path d="M1.500 5.300 L5 1.800 L8.500 5.300" fill="none" stroke="#f0f0f0" stroke-width="1.500" stroke-linecap="round" stroke-linejoin="round"/></svg>
<div class="t" style="left:128.00px;top:661.64px;font-size:12px;font-weight:700;color:#f4f4f4;transform:scaleX(0.9160);transform-origin:0 0;">Видео</div>
<svg class="abs" style="left:300px;top:635px" width="21" height="19" viewBox="0 0 21 19"><g fill="none" stroke="#f2f2f2" stroke-width="1.500"><circle cx="5.600" cy="3.600" r="2.500"/><circle cx="14" cy="6" r="2.500"/><path d="M8.300 9 L4.500 9 Q1.500 9 1.500 12.500 L1.500 14 Q1.500 16.500 4 16.500 L6.500 16.500" stroke-linecap="round"/><rect x="8.600" y="11.300" width="10.600" height="6" rx="3"/></g></svg>
<div class="t" style="left:327.00px;top:637.87px;font-size:11.5px;color:#cfcfcf;transform:scaleX(0.8599);transform-origin:0 0;">15</div>
<svg class="abs" style="left:359px;top:640px" width="10" height="7" viewBox="0 0 10 7"><path d="M1.500 5.300 L5 1.800 L8.500 5.300" fill="none" stroke="#f0f0f0" stroke-width="1.500" stroke-linecap="round" stroke-linejoin="round"/></svg>
<div class="t" style="left:281.00px;top:661.64px;font-size:12px;font-weight:700;color:#f4f4f4;transform:scaleX(0.9487);transform-origin:0 0;">Участники</div>
<svg class="abs" style="left:408px;top:632px" width="25" height="24" viewBox="0 0 25 24"><g fill="none" stroke="#f2f2f2" stroke-width="1.500" stroke-linejoin="round"><path d="M6.500 5.500 L6.500 4.500 Q6.500 1.500 9.500 1.500 L20 1.500 Q23 1.500 23 4.500 L23 10 Q23 13 20.500 13"/><path d="M4.500 6.800 L15.500 6.800 Q18.500 6.800 18.500 9.800 L18.500 15.500 Q18.500 18.500 15.500 18.500 L10.500 18.500 L6.300 22 L6.300 18.500 L4.500 18.500 Q1.500 18.500 1.500 15.500 L1.500 9.800 Q1.500 6.800 4.500 6.800Z"/></g><g fill="#f2f2f2"><circle cx="6.300" cy="12.700" r="1.100"/><circle cx="10" cy="12.700" r="1.100"/><circle cx="13.700" cy="12.700" r="1.100"/></g></svg>
<svg class="abs" style="left:448.5px;top:640px" width="10" height="7" viewBox="0 0 10 7"><path d="M1.500 5.300 L5 1.800 L8.500 5.300" fill="none" stroke="#f0f0f0" stroke-width="1.500" stroke-linecap="round" stroke-linejoin="round"/></svg>
<div class="t" style="left:412.00px;top:661.64px;font-size:12px;font-weight:700;color:#f4f4f4;transform:scaleX(0.8578);transform-origin:0 0;">Чат</div>
<svg class="abs" style="left:503px;top:633px" width="27" height="22" viewBox="0 0 27 22"><path d="M13.500 20 C7 16.500 1.600 12 1.600 7 C1.600 3.600 4.200 1.600 7 1.600 C9.800 1.600 12.200 3.200 13.500 5.700 C14.800 3.200 17.200 1.600 20 1.600 C22.800 1.600 25.400 3.600 25.400 7 C25.400 12 20 16.500 13.500 20Z" fill="none" stroke="#f2f2f2" stroke-width="1.500" stroke-linejoin="round" transform="rotate(-8 13.500 11)"/></svg>
<svg class="abs" style="left:551px;top:640px" width="10" height="7" viewBox="0 0 10 7"><path d="M1.500 5.300 L5 1.800 L8.500 5.300" fill="none" stroke="#f0f0f0" stroke-width="1.500" stroke-linecap="round" stroke-linejoin="round"/></svg>
<div class="t" style="left:473.80px;top:661.64px;font-size:12px;font-weight:700;color:#f4f4f4;transform:scaleX(0.9515);transform-origin:0 0;">Отреагировать</div>
<div class="abs" style="left:604.500px;top:634.300px;width:23.800px;height:19.200px;border-radius:3px;background:#20e38b"></div>
<svg class="abs" style="left:610px;top:637px" width="13" height="14" viewBox="0 0 13 14"><path d="M6.500 12.300 L6.500 2.600 M2.300 6.600 L6.500 2.300 L10.700 6.600" fill="none" stroke="#000" stroke-width="2.200" stroke-linecap="round" stroke-linejoin="round"/></svg>
<svg class="abs" style="left:648.5px;top:640px" width="10" height="7" viewBox="0 0 10 7"><path d="M1.500 5.300 L5 1.800 L8.500 5.300" fill="none" stroke="#f0f0f0" stroke-width="1.500" stroke-linecap="round" stroke-linejoin="round"/></svg>
<div class="t" style="left:583.80px;top:661.64px;font-size:12px;font-weight:700;color:#f4f4f4;transform:scaleX(0.9123);transform-origin:0 0;">Поделиться</div>
<svg class="abs" style="left:743px;top:633px" width="20" height="22" viewBox="0 0 20 22"><path d="M10 1.400 L17.800 4 Q18.300 4.200 18.300 4.800 L18.300 9.500 Q18.300 16.500 10 20.500 Q1.700 16.500 1.700 9.500 L1.700 4.800 Q1.700 4.200 2.200 4 Z" fill="none" stroke="#f2f2f2" stroke-width="1.500" stroke-linejoin="round"/><path d="M10 4.300 L10 10.500 L4.500 10.500 L4.500 6.200 Z" fill="#f2f2f2"/><path d="M10 10.500 L15.500 10.500 Q15 15 10 17.600 Z" fill="#f2f2f2"/></svg>
<div class="t" style="left:674.50px;top:661.64px;font-size:12px;font-weight:700;color:#f4f4f4;transform:scaleX(0.9553);transform-origin:0 0;">Инструменты организатора</div>
<svg class="abs" style="left:920px;top:631px" width="26" height="26" viewBox="0 0 26 26"><circle cx="13" cy="12.700" r="11.200" fill="none" stroke="#f2f2f2" stroke-width="1.500"/><circle cx="13" cy="7.300" r="1.500" fill="#f2f2f2"/><path d="M10.800 10.800 L13.300 10.800 L13.300 17.800 M10.500 18 L16 18" fill="none" stroke="#f2f2f2" stroke-width="1.700"/></svg>
<div class="t" style="left:848.80px;top:661.64px;font-size:12px;font-weight:700;color:#f4f4f4;transform:scaleX(0.9769);transform-origin:0 0;">Информация о конференции</div>
<svg class="abs" style="left:1067px;top:631px" width="26" height="26" viewBox="0 0 26 26"><circle cx="13" cy="12.700" r="11.200" fill="none" stroke="#f2f2f2" stroke-width="1.500"/><circle cx="8" cy="12.700" r="1.350" fill="#f2f2f2"/><circle cx="13" cy="12.700" r="1.350" fill="#f2f2f2"/><circle cx="18" cy="12.700" r="1.350" fill="#f2f2f2"/></svg>
<div class="t" style="left:1034.50px;top:661.64px;font-size:12px;font-weight:700;color:#f4f4f4;transform:scaleX(0.9611);transform-origin:0 0;">Дополнительно</div>
<svg class="abs" style="left:1215px;top:631px" width="27" height="26" viewBox="0 0 27 26"><path d="M2.600 13 L8 3.200 L19 3.200 L24.400 13 L19 22.800 L8 22.800 Z" fill="none" stroke="#e3174f" stroke-width="1.700" stroke-linejoin="round"/><path d="M9.800 9.300 L17.200 16.700 M17.200 9.300 L9.800 16.700" stroke="#fff" stroke-width="2.600" fill="none"/></svg>
<div class="t" style="left:1193.50px;top:661.64px;font-size:12px;font-weight:700;color:#f4f4f4;transform:scaleX(0.9661);transform-origin:0 0;">Завершение</div>
</body>
</html>
